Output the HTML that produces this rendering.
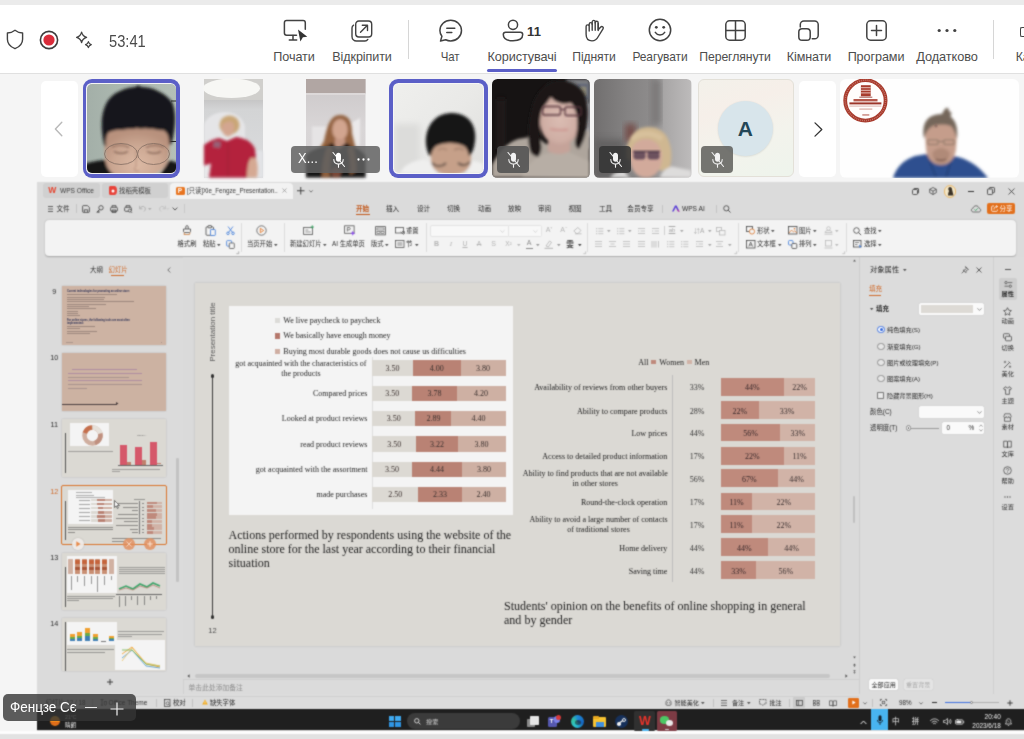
<!DOCTYPE html>
<html lang="uk">
<head>
<meta charset="utf-8">
<title>Meeting</title>
<style>
*{box-sizing:border-box;margin:0;padding:0}
html,body{width:1024px;height:739px;overflow:hidden;background:#f5f5f5;font-family:"Liberation Sans","Noto Sans CJK SC",sans-serif;color:#424242}
.abs{position:absolute}
#root{position:relative;width:1024px;height:739px;overflow:hidden;background:#f5f5f5}
#topstrip{left:0;top:0;width:1024px;height:5px;background:#ebebeb}
#toolbar{left:0;top:5px;width:1024px;height:69px;background:#fff;border-bottom:1px solid #e0e0e0}
.tb{position:absolute;top:44.3px;font-size:13.5px;color:#4d4d4d;white-space:nowrap;transform:translateX(-50%);letter-spacing:-0.1px}
.ic{position:absolute}
svg{display:block;overflow:visible}
.sf{position:absolute;white-space:nowrap;line-height:1.15;font-family:"Liberation Serif",serif}
.c{position:absolute;white-space:nowrap;line-height:1.2;font-family:"Liberation Sans","Noto Sans CJK SC",sans-serif}
.mb{top:146px;width:32px;height:27px;border-radius:4px;background:rgba(70,70,70,.82)}
.mb:after{content:"";position:absolute;left:0;top:0;width:32px;height:27px}

</style>
</head>
<body>
<div id="root">
<div class="abs" id="topstrip"></div>
<div class="abs" id="toolbar">
  <span class="abs" style="left:109px;top:26.500px;font-size:16.500px;color:#4a4a4a;transform:scaleX(.89);transform-origin:0 50%">53:41</span>

  <!-- shield -->
  <svg class="ic" style="left:6px;top:24px" width="18" height="21" viewBox="0 0 18 21"><path d="M9 1.2c2.4 1.9 4.9 2.7 7.6 2.8v6.3c0 4.300-2.800 7.500-7.600 9.400c-4.800-1.900-7.600-5.100-7.600-9.400v-6.300c2.700-.1 5.200-.9 7.600-2.800z" fill="none" stroke="#424242" stroke-width="1.4" stroke-linejoin="round"/></svg>
  <!-- record -->
  <svg class="ic" style="left:39px;top:25px" width="20" height="20" viewBox="0 0 20 20"><circle cx="10" cy="10" r="8.6" fill="none" stroke="#3d3d3d" stroke-width="1.6"/><circle cx="10" cy="10" r="5.6" fill="#d92c3a"/></svg>
  <!-- sparkle -->
  <svg class="ic" style="left:75px;top:26px" width="18" height="18" viewBox="0 0 18 18"><path d="M6.600 1.200c.7 3 1.900 4.400 5 5.200c-3.100.8-4.300 2.200-5 5.200c-.7-3-1.900-4.400-5-5.200c3.100-.8 4.300-2.200 5-5.200z" fill="none" stroke="#424242" stroke-width="1.3" stroke-linejoin="round"/><path d="M13.400 10.700c.4 1.700 1.100 2.500 2.900 3c-1.800.5-2.500 1.300-2.900 3c-.4-1.700-1.100-2.500-2.900-3c1.800-.5 2.500-1.300 2.900-3z" fill="none" stroke="#424242" stroke-width="1.2" stroke-linejoin="round"/></svg>
  <!-- share screen (Почати) -->
  <svg class="ic" style="left:283px;top:14px" width="25" height="24" viewBox="0 0 25 24"><path d="M13.500 16.300H3.600c-1.200 0-2.200-1-2.200-2.200V3.800c0-1.200 1-2.200 2.200-2.200h16.500c1.200 0 2.200 1 2.200 2.200v6.500" fill="none" stroke="#424242" stroke-width="1.500" stroke-linecap="round"/><path d="M10 16.500v4.300M6.300 21h7.400" fill="none" stroke="#424242" stroke-width="1.500" stroke-linecap="round"/><path d="M15 10.500l9.300 7.300-4.400.5-2.500 4.200z" fill="#333"/></svg>
  <!-- popout (Відкріпити) -->
  <svg class="ic" style="left:351px;top:15px" width="22" height="22" viewBox="0 0 22 22"><rect x="4.700" y="1" width="16" height="16" rx="3.200" fill="none" stroke="#424242" stroke-width="1.400"/><path d="M2.600 5.200c-1 .6-1.600 1.600-1.600 2.800v8.500c0 2.500 2 4.500 4.500 4.500h8.500c1.200 0 2.200-.6 2.800-1.600" fill="none" stroke="#424242" stroke-width="1.400" stroke-linecap="round"/><path d="M9.500 12.300l6.700-6.700M11.300 5.300h5.200v5.200" fill="none" stroke="#424242" stroke-width="1.400" stroke-linecap="round" stroke-linejoin="round"/></svg>
  <div class="abs" style="left:407.500px;top:15px;width:1px;height:39px;background:#d6d6d6"></div>
  <!-- chat -->
  <svg class="ic" style="left:438px;top:14px" width="25" height="24" viewBox="0 0 25 24"><path d="M12.700 1.300c6 0 10.800 4.600 10.800 10.300s-4.800 10.300-10.800 10.300c-1.800 0-3.500-.4-5-1.100l-5.200 1.300 1.400-4.800c-1.300-1.600-2-3.600-2-5.700c0-5.700 4.800-10.300 10.800-10.300z" fill="none" stroke="#424242" stroke-width="1.500" stroke-linejoin="round"/><path d="M8.800 9.200h8M8.800 13.600h5" stroke="#424242" stroke-width="1.500" stroke-linecap="round"/></svg>
  <!-- people -->
  <svg class="ic" style="left:502px;top:14px" width="22" height="24" viewBox="0 0 22 24"><circle cx="11" cy="5.800" r="4.600" fill="none" stroke="#424242" stroke-width="1.500"/><path d="M3.600 13.300h14.800c1.300 0 2.300 1 2.300 2.300c0 3.800-3.600 6.200-9.700 6.200s-9.700-2.400-9.700-6.200c0-1.300 1-2.300 2.300-2.300z" fill="none" stroke="#424242" stroke-width="1.500"/></svg>
  <span class="abs" style="left:527px;top:18.500px;font-size:13px;font-weight:700;color:#333;letter-spacing:0.3px">11</span>
  <div class="abs" style="left:487px;top:64px;width:70px;height:3px;border-radius:1.500px;background:#5b5fc7"></div>
  <!-- hand -->
  <svg class="ic" style="left:585px;top:14px" width="20" height="24" viewBox="0 0 20 24"><path d="M4.200 12V5.200c0-.9.700-1.600 1.500-1.600s1.500.7 1.500 1.600V3c0-.9.700-1.600 1.500-1.600s1.500.7 1.500 1.600v.9c0-.9.700-1.600 1.500-1.600s1.500.7 1.500 1.600v6.800l2.300-2.500c.7-.7 1.700-.8 2.400-.2c.5.500.5 1.300.1 1.900l-4.700 7.600c-1.300 2.500-3.300 4.400-6.300 4.400c-3.800 0-5.900-2.800-5.900-6.600V7.500c0-.9.700-1.600 1.500-1.600s1.600.7 1.600 1.600" fill="none" stroke="#424242" stroke-width="1.400" stroke-linecap="round" stroke-linejoin="round"/><path d="M7.200 5v6.200M10.200 3.500v7.700M13.200 4.500v7" fill="none" stroke="#424242" stroke-width="1.400" stroke-linecap="round"/></svg>
  <!-- smile -->
  <svg class="ic" style="left:648px;top:13px" width="24" height="24" viewBox="0 0 24 24"><circle cx="12" cy="12" r="10.700" fill="none" stroke="#424242" stroke-width="1.500"/><circle cx="8.300" cy="9.300" r="1.400" fill="#424242"/><circle cx="15.700" cy="9.300" r="1.400" fill="#424242"/><path d="M7.300 14.300c1.100 1.700 2.700 2.600 4.700 2.600s3.600-.9 4.700-2.600" fill="none" stroke="#424242" stroke-width="1.500" stroke-linecap="round"/></svg>
  <!-- grid -->
  <svg class="ic" style="left:725px;top:15px" width="21" height="21" viewBox="0 0 21 21"><rect x=".8" y=".8" width="19.400" height="19.400" rx="3.800" fill="none" stroke="#424242" stroke-width="1.500"/><path d="M10.500 1v19M1 10.500h19" stroke="#424242" stroke-width="1.500"/></svg>
  <!-- rooms -->
  <svg class="ic" style="left:798px;top:15px" width="22" height="21" viewBox="0 0 22 21"><path d="M2.300 7V4.500c0-2 1.600-3.600 3.600-3.600h10.700c2 0 3.600 1.600 3.600 3.600v10.700c0 2-1.600 3.600-3.600 3.600h-2.400" fill="none" stroke="#424242" stroke-width="1.500" stroke-linecap="round"/><rect x=".8" y="8.800" width="11.400" height="11.400" rx="3.300" fill="none" stroke="#424242" stroke-width="1.500"/></svg>
  <!-- apps plus -->
  <svg class="ic" style="left:866px;top:15px" width="21" height="21" viewBox="0 0 21 21"><rect x=".8" y=".8" width="19.400" height="19.400" rx="3.800" fill="none" stroke="#424242" stroke-width="1.500"/><path d="M10.500 5.500v10M5.500 10.500h10" stroke="#424242" stroke-width="1.500" stroke-linecap="round"/></svg>
  <!-- more dots -->
  <svg class="ic" style="left:937px;top:22.500px" width="20" height="5" viewBox="0 0 20 5"><circle cx="2.200" cy="2.500" r="1.600" fill="#424242"/><circle cx="10" cy="2.500" r="1.600" fill="#424242"/><circle cx="17.800" cy="2.500" r="1.600" fill="#424242"/></svg>
  <div class="abs" style="left:993px;top:15px;width:1px;height:39px;background:#d6d6d6"></div>
  <div class="abs" style="left:1020px;top:22px;width:6px;height:10px;border:1.500px solid #424242;border-right:none;border-radius:2px 0 0 2px"></div>
  <span class="tb" style="left:294px;transform:translateX(-50%) scaleX(0.935)">Почати</span>
  <span class="tb" style="left:362px;transform:translateX(-50%) scaleX(0.931)">Відкріпити</span>
  <span class="tb" style="left:450px;transform:translateX(-50%) scaleX(0.848)">Чат</span>
  <span class="tb" style="left:522px;transform:translateX(-50%) scaleX(0.939)">Користувачі</span>
  <span class="tb" style="left:594px;transform:translateX(-50%) scaleX(0.897)">Підняти</span>
  <span class="tb" style="left:660px;transform:translateX(-50%) scaleX(0.888)">Реагувати</span>
  <span class="tb" style="left:735px;transform:translateX(-50%) scaleX(0.906)">Переглянути</span>
  <span class="tb" style="left:809px;transform:translateX(-50%) scaleX(0.927)">Кімнати</span>
  <span class="tb" style="left:876px;transform:translateX(-50%) scaleX(0.935)">Програми</span>
  <span class="tb" style="left:947px;transform:translateX(-50%) scaleX(0.946)">Додатково</span>
  <span class="tb" style="left:1037px;transform:translateX(-50%) scaleX(0.915)">Камера</span>
</div>

<!-- video strip -->
<div class="abs" style="left:41px;top:81px;width:37px;height:96px;background:#fff;border-radius:5px"></div>
<svg class="abs" style="left:54px;top:121px" width="9" height="16" viewBox="0 0 9 16"><path d="M7.800 1.200L1.400 8l6.400 6.800" fill="none" stroke="#b9b9b9" stroke-width="1.400" stroke-linecap="round" stroke-linejoin="round"/></svg>

<!-- tile 1 -->
<div class="abs" style="left:82.500px;top:79px;width:97.500px;height:98.700px;border-radius:9px;background:#5b5fc7"></div>
<div class="abs" style="left:86.300px;top:82.900px;width:90px;height:91px;border-radius:5.500px;background:#f4f4f4"></div>
<svg class="abs" style="left:87px;top:83.600px;border-radius:5px;overflow:hidden" width="89" height="89.500" viewBox="0 0 89 89.500">
 <defs><filter id="b1" x="-20%" y="-20%" width="140%" height="140%"><feGaussianBlur stdDeviation="1.600"/></filter><filter id="b2" x="-20%" y="-20%" width="140%" height="140%"><feGaussianBlur stdDeviation="3"/></filter><filter id="b0" x="-20%" y="-20%" width="140%" height="140%"><feGaussianBlur stdDeviation=".8"/></filter>
 <linearGradient id="t1bg" x1="0" x2="1" y1="0" y2="0"><stop offset="0" stop-color="#a3afa8"/><stop offset=".3" stop-color="#aab6ae"/><stop offset="1" stop-color="#b4bfb7"/></linearGradient>
 <radialGradient id="t1f" cx=".5" cy=".75" r=".6"><stop offset="0" stop-color="#dcb9a4"/><stop offset=".6" stop-color="#cba792"/><stop offset="1" stop-color="#b8917d"/></radialGradient></defs>
 <rect width="89" height="89.500" fill="url(#t1bg)"/>
 <path d="M84 17h5M82 57.500h7" stroke="#2a2d2c" stroke-width="1.200"/>
 <g filter="url(#b1)">
 <path d="M-2 92V80c5-2 12-3.500 20-4l10 16zM92 92V80c-3-2-6-3-10-3.500L72 92z" fill="#121416"/>
 <path d="M17 48c2-6 8-9 16-9h30c10 0 18 4 20 12l-1 22c-2 12-14 22-36 22S18 84 18 72z" fill="url(#t1f)"/>
 <path d="M17 60c-3-14-4-30 3-42C26 8 38 4 48 3c3-2 5-2 6 0c12 0 24 6 31 15c4 8 4 24 0 40c-1 4-3 4-3 0c0-6-2-10-6-12c-5 1-9-2-14-1c-4-2-8 1-12-1c-5 2-10 0-15 2c-5-1-9 1-13 2c-3 3-3 8-3 12c0 3-1 3-2 0z" fill="#15171a"/>
 </g>
 <g filter="url(#b0)">
 <path d="M25 63c5-2.500 11-2.500 17 .5M59 63.500c6-3 12-3 18-.5" fill="none" stroke="#8a6555" stroke-width="1.400" opacity=".75"/>
 <path d="M27 67.500c4 2.500 10 2.500 14 0M60 67.500c4 2.500 10 2.500 14 0" fill="none" stroke="#6e4f44" stroke-width="1.300" opacity=".8"/>
 <path d="M49 66v16c-2 2-2 4 0 5h3" fill="none" stroke="#b48e7b" stroke-width="1.500" opacity=".6"/>
 </g>
 <g fill="none" stroke="#7a665c" stroke-width=".9" opacity=".8"><ellipse cx="34" cy="70" rx="16.500" ry="10.500"/><ellipse cx="66.500" cy="70" rx="16" ry="10.500"/></g>
</svg>

<!-- tile 2 -->
<svg class="abs" style="left:204px;top:79px" width="59" height="98.600" viewBox="0 0 59 98.600">
 <defs><linearGradient id="t2w" x1="0" x2="0" y1="0" y2="1"><stop offset="0" stop-color="#c6c6c6"/><stop offset=".12" stop-color="#d3d4d5"/><stop offset="1" stop-color="#dcdddf"/></linearGradient></defs>
 <rect width="59" height="98.600" fill="#d0cfcc"/>
 <rect y="21" width="59" height="77.600" fill="url(#t2w)"/>
 <ellipse cx="27.500" cy="9.300" rx="28.500" ry="9.700" fill="#f7f7f4"/>
 <g filter="url(#b0)">
 <path d="M0 98.600V45c3-7 11-12 21-12s17 5 20 14v51.600z" fill="#e5e5e7"/>
 <rect x="50" y="72" width="9" height="26.600" fill="#e2e3e6"/>
 <rect x="0" y="84" width="9" height="14.600" fill="#e8e8ea"/>
 </g>
 <g filter="url(#b1)">
 <ellipse cx="25.500" cy="46" rx="10" ry="9.500" fill="#c9a676"/>
 <ellipse cx="24" cy="49" rx="6.300" ry="8.500" fill="#d3a690"/>
 <path d="M19 44c2-3 7-4 11-2" stroke="#c9a676" stroke-width="3" fill="none"/>
 <path d="M0 66c4-3 9-6 15-7l8 3 9-4c8 1 16 4 19 12l1 10-7 2-2 16.600H5l2-14-7 2z" fill="#b4233d"/>
 <path d="M43 98.600c0-9 1-15 4-20l5 1c2 6 2 12 1 19z" fill="#d5a993"/>
 <path d="M10 62l7 1-1 6-7-1z" fill="#8a7a90" opacity=".7"/>
 <path d="M24 64v34" stroke="#8f1a30" stroke-width="1" opacity=".7"/>
 </g>
</svg>

<!-- tile 3 -->
<svg class="abs" style="left:306px;top:79px" width="59.500" height="98.600" viewBox="0 0 59.500 98.600">
 <defs><linearGradient id="t3w" x1="0" x2="0" y1="0" y2="1"><stop offset="0" stop-color="#cbc7c8"/><stop offset=".5" stop-color="#d9d6d7"/><stop offset="1" stop-color="#d6d3d4"/></linearGradient></defs>
 <rect width="59.500" height="98.600" fill="url(#t3w)"/>
 <rect width="59.500" height="14.500" fill="#b1a6a3"/>
 <rect y="14.300" width="59.500" height="1.200" fill="#e9e6e6"/>
 <g filter="url(#b0)">
 <rect x="6" y="47.500" width="17" height="23" fill="#e6e4e5"/>
 <path d="M42 46l12-7v27l-12 3z" fill="#ebe9ea"/>
 </g>
 <g filter="url(#b1)">
 <path d="M4 92c2-10 8-20 14-30c3-14 6-26 16-26c10 0 12 8 12 18c2 10 6 20 6 34l-10 8H10z" fill="#93623f"/>
 <path d="M6 90c3-10 8-18 13-26c1 8 0 18-3 28z" fill="#a9753f"/>
 <ellipse cx="34" cy="50.500" rx="7.800" ry="10.500" fill="#d2a58f"/>
 <path d="M29 60h10v9H29z" fill="#c49682"/>
 <path d="M0 98.600V76c4-4 10-7 18-8l8-4 6 6 8-6 8 4c5 2 9 5 11.500 9v21.600z" fill="#141518"/>
 <path d="M16 98.600c0-12 2-22 6-32l4 4c-2 9-3 18-2 28zM50 92c0-10-1-18-4-26l-4 4c2 8 3 16 2 26z" fill="#8d5e3c"/>
 <path d="M24 92l6-4 6 4-3 6.600h-6z" fill="#7a4a38"/>
 </g>
</svg>
<div class="abs" style="left:291.300px;top:145.700px;width:88.700px;height:27.400px;border-radius:4px;background:rgba(98,98,98,.86)"></div>
<span class="abs" style="left:298px;top:150px;font-size:14px;color:#fff;letter-spacing:.2px;transform:scaleX(.92);transform-origin:0 50%">X...</span>
<svg class="abs" style="left:330.5px;top:150.500px" width="15" height="18" viewBox="0 0 15 18"><path d="M7.500 1.800c1.500 0 2.500 1.100 2.500 2.500v4c0 1.400-1 2.500-2.500 2.500S5 9.700 5 8.300v-4c0-1.400 1-2.500 2.500-2.500z" fill="#fff"/><path d="M2.800 8.500c0 2.600 2 4.600 4.700 4.600s4.700-2 4.700-4.600M7.500 13.200v3" fill="none" stroke="#fff" stroke-width="1.100" stroke-linecap="round"/><path d="M2 1.500l11.500 14" stroke="#fff" stroke-width="1.100" stroke-linecap="round"/></svg>
<svg class="abs" style="left:357px;top:158.200px" width="13" height="3" viewBox="0 0 13 3"><circle cx="1.500" cy="1.500" r="1.150" fill="#fff"/><circle cx="6.500" cy="1.500" r="1.150" fill="#fff"/><circle cx="11.500" cy="1.500" r="1.150" fill="#fff"/></svg>

<!-- tile 4 -->
<div class="abs" style="left:389px;top:79px;width:98.600px;height:98.700px;border-radius:9px;background:#5b5fc7"></div>
<div class="abs" style="left:393px;top:82.900px;width:90.800px;height:91px;border-radius:5.500px;background:#f6f6f6"></div>
<svg class="abs" style="left:393.700px;top:83.600px;border-radius:5px;overflow:hidden" width="89.700" height="89.500" viewBox="0 0 89.700 89.500">
 <defs><linearGradient id="t4bg" x1="0" x2="1" y1="0" y2="1"><stop offset="0" stop-color="#efefed"/><stop offset=".5" stop-color="#e9e9e7"/><stop offset="1" stop-color="#dededc"/></linearGradient></defs>
 <rect width="89.700" height="89.500" fill="url(#t4bg)"/>
 <rect x="0" y="40" width="26" height="50" fill="#dcdcda" filter="url(#b2)"/>
 <g filter="url(#b1)">
 <path d="M6 89.500c3-8 12-13 24-14l12 4v10.500zM89.700 89.500V80c-4-2-8-3-12-3l-6 12.500z" fill="#efefee"/>
 <path d="M37 58h40v20c-1 8-9 13-20 13s-19-5-20-13z" fill="#c6a089"/>
 <path d="M33 66c-3-12 0-24 8-31c8-7 22-8 31-2c9 6 11 18 8 30c-1 4-3 8-5 9c-1-4-2-8-5-10c-8-4-20-4-28 0c-3 3-5 6-5 10c-2 0-3-3-4-6z" fill="#131416"/>
 <path d="M38 79c4 4 10 4 14 0M64 79c4 3 8 3 12-1" fill="none" stroke="#2f2a28" stroke-width="1.700"/>
 <path d="M44 66c3-2 6-2 9 0M60 66c3-2 7-2 10 0" fill="none" stroke="#7a5a4c" stroke-width="1.200" opacity=".7"/>
 </g>
</svg>

<!-- tile 5 -->
<svg class="abs" style="left:492px;top:79px;border-radius:5.500px;overflow:hidden" width="97.600" height="98.600" viewBox="0 0 97.600 98.600">
 <defs><radialGradient id="t5f" cx=".5" cy=".5" r=".6"><stop offset="0" stop-color="#dbbcb2"/><stop offset=".7" stop-color="#cfaea4"/><stop offset="1" stop-color="#b8958c"/></radialGradient></defs>
 <rect width="97.600" height="98.600" fill="#161313"/>
 <rect x="5" y="20" width="8" height="50" fill="#241f1e" filter="url(#b2)"/>
 <rect x="74" y="0" width="23.600" height="70" fill="#7a7b80" filter="url(#b1)"/>
 <rect x="88" y="24" width="9.600" height="34" fill="#aeaeb2" filter="url(#b1)"/>
 <rect x="85.500" y="5" width="11" height="15" fill="#5f6577" filter="url(#b0)"/>
 <rect x="87.500" y="7.500" width="7" height="10" fill="#8d8a78" filter="url(#b0)"/>
 <g filter="url(#b1)">
 <path d="M0 98.600V86c6-12 14-22 26-26l18-3 10 8h22l8-8 13.600-6v47.600z" fill="#aea59c"/>
 <path d="M30 98.600c4-12 12-20 24-24l22-2 21.600 10v16.600z" fill="#b7aea5"/>
 <path d="M56 56h22v16c-6 4-16 4-22 0z" fill="#c5a399"/>
 <ellipse cx="68" cy="40.500" rx="20.500" ry="26" fill="url(#t5f)"/>
 <path d="M38 72c-3-12-2-30 2-44c3-12 10-22 22-26c12-3 24 2 30 12c4 8 5 20 3 32c-1 10-4 18-8 24c-3-1-4-4-4-8c2-8 3-16 2-24c-1-6-3-10-6-14c-8 2-16 0-20-6c-4 6-8 10-10 16c-2 10-2 20 0 30c1 6 0 10-3 14c-4-1-7-3-8-6z" fill="#1b1819"/>
 <path d="M58 50c6 1.500 12 1.500 18 .5" stroke="#c98a86" stroke-width="1.800" fill="none" opacity=".8"/>
 </g>
 <g filter="url(#b0)" fill="none" stroke="#55353c" stroke-width="1.300"><rect x="50.500" y="27.500" width="18" height="8.500" rx="2"/><rect x="73" y="28" width="16" height="8.500" rx="2"/><path d="M68.500 30.500h4.500"/></g>
</svg>
<div class="abs" style="left:497px;top:146px;width:31.800px;height:27px;border-radius:4px;background:rgba(84,84,84,.9)"></div>

<!-- tile 6 -->
<svg class="abs" style="left:594.200px;top:79px;border-radius:5.500px;overflow:hidden" width="97.400" height="98.600" viewBox="0 0 97.400 98.600">
 <defs><linearGradient id="g6" x1="0" x2="1" y1="0" y2="0"><stop offset="0" stop-color="#716f6f"/><stop offset=".35" stop-color="#858383"/><stop offset=".6" stop-color="#8e8c8c"/><stop offset=".72" stop-color="#a8a6a6"/><stop offset="1" stop-color="#bdbbbb"/></linearGradient></defs>
 <rect width="97.400" height="98.600" fill="url(#g6)"/>
 <rect x="57" y="0" width="10" height="46" fill="#7b7979" filter="url(#b2)"/>
 <rect x="0" y="60" width="30" height="38.600" fill="#5f5d5d" filter="url(#b2)" opacity=".8"/>
 <rect x="31" y="45" width="11" height="18" fill="#76504b" filter="url(#b2)"/>
 <g filter="url(#b1)">
 <path d="M66 98.600c2-6 6-10 12-11l19.400 4v7zM16 98.600c3-4 8-6 14-6l6 6z" fill="#dddcdb"/>
 <path d="M33 80c-2-12 2-24 12-30c10-4 22-2 28 8c4 8 6 18 3 30l-8 4z" fill="#cfb791"/>
 <path d="M36 78c0-10 6-18 16-18s16 8 16 18c0 12-6 20.600-16 20.600S36 90 36 78z" fill="#d2aa9b"/>
 <path d="M38 60c6-6 20-8 30 0" stroke="#d8c19c" stroke-width="5" fill="none"/>
 </g>
 <g filter="url(#b0)"><rect x="39.500" y="72" width="12" height="8.500" rx="3" fill="#5a4253" opacity=".85"/><rect x="53.500" y="72" width="12" height="8.500" rx="3" fill="#5a4253" opacity=".85"/><path d="M39 72.500h27" stroke="#3e2c3a" stroke-width="1.300"/></g>
</svg>
<div class="abs" style="left:599px;top:146px;width:32px;height:27px;border-radius:4px;background:rgba(52,52,52,.88)"></div>

<!-- tile 7 -->
<div class="abs" style="left:697.500px;top:79.200px;width:96.400px;height:98px;border-radius:6px;border:1px solid #e3e0d8;background:linear-gradient(160deg,#f3f1ea 0%,#f6efe9 30%,#f3f3ec 60%,#eef4ec 100%)"></div>
<div class="abs" style="left:718px;top:101.300px;width:55px;height:55px;border-radius:50%;background:#d8e5eb;box-shadow:0 .5px 2px rgba(0,0,0,.12)"></div>
<span class="abs" style="left:745.400px;top:116.600px;transform:translateX(-50%);font-size:21px;font-weight:700;color:#234657;line-height:1.15">A</span>
<div class="abs" style="left:701px;top:145.800px;width:32.200px;height:27.300px;border-radius:4px;background:rgba(92,92,88,.84)"></div>
<!-- next -->
<div class="abs" style="left:799px;top:81px;width:36.500px;height:96.200px;background:#fff;border-radius:5px"></div>
<svg class="abs" style="left:813.500px;top:121.600px" width="9" height="15" viewBox="0 0 9 15"><path d="M1 .900l6.800 6.600L1 14.100" fill="none" stroke="#333" stroke-width="1.300" stroke-linecap="round" stroke-linejoin="round"/></svg>
<!-- big tile -->
<svg class="abs" style="left:839.700px;top:79.300px;border-radius:6px;overflow:hidden" width="179" height="98.600" viewBox="0 0 179 98.600">
 <rect width="179" height="98.600" fill="#fefefe"/>
 <circle cx="25.400" cy="21.400" r="20.200" fill="#fffdfc" stroke="#a83b2d" stroke-width="3.800"/>
 <circle cx="25.400" cy="21.400" r="20.200" fill="none" stroke="#d9a096" stroke-width="1.400" stroke-dasharray=".7 1.300" opacity=".75"/>
 <rect x="20.900" y="6.200" width="9.800" height="11.100" fill="#a83b2d"/>
 <path d="M20.900 8.700h9.800M20.900 11.300h9.800M20.900 13.900h9.800" stroke="#f0cfc8" stroke-width=".9"/>
 <path d="M19.300 18.200h13" stroke="#8a2f25" stroke-width=".8"/>
 <rect x="13.500" y="20" width="24" height="2.400" fill="#a83b2d" opacity=".85"/>
 <rect x="9.400" y="23.400" width="32" height="2" fill="#9c3428"/>
 <path d="M9.400 27.100h32" stroke="#b9685d" stroke-width=".5"/>
 <rect x="19.300" y="29.500" width="13" height="1.200" fill="#c98a80" opacity=".7"/>
 <rect x="22.300" y="35.300" width="7" height="1.300" fill="#b4574b" opacity=".8"/>
 <g filter="url(#b1)">
 <path d="M53 99c3-10 10-18 22-22l12-2 14 8 12-6c14 2 26 10 35 22z" fill="#2f4f8f"/>
 <path d="M88 78l8 20M112 78l-6 20" stroke="#223c72" stroke-width="1.500" fill="none"/>
 <path d="M85 54c0-12 6-18 16-18s16 6 16 18l-1 16c-1 10-7 16-15 16s-14-6-15-16z" fill="#c59d8b"/>
 <path d="M92 74c2-3 5-5 9-5s7 2 9 5c-1 7-4 11-9 11s-8-4-9-11z" fill="#b08a78"/>
 <path d="M84 60c-2-10 0-18 6-22c3-2 8-3 12-3c2-4 4-7 6-6c1 2 1 4 4 5c-1 1-2 2-1 4c5 4 7 12 6 22c-2-6-3-10-6-13c-7-2-14-2-20 1c-4 3-6 7-7 12z" fill="#74665a"/>
 </g>
 <g filter="url(#b0)"><path d="M88 61h10v4.500H88zM104 61h10v4.500h-10zM98 62.500h6" fill="none" stroke="#8c7668" stroke-width=".9"/><path d="M96 80c3 1.500 7 1.500 10 0" stroke="#7a5a50" stroke-width="1.300" fill="none"/><circle cx="96" cy="47" r=".9" fill="#4a3a34"/></g>
</svg>
<svg class="abs" style="left:505.5px;top:150.500px" width="15" height="18" viewBox="0 0 15 18"><path d="M7.500 1.800c1.500 0 2.500 1.100 2.500 2.500v4c0 1.400-1 2.500-2.500 2.500S5 9.700 5 8.300v-4c0-1.400 1-2.500 2.500-2.500z" fill="#f2f2f2"/><path d="M2.800 8.500c0 2.600 2 4.600 4.700 4.600s4.700-2 4.700-4.600M7.500 13.200v3" fill="none" stroke="#f2f2f2" stroke-width="1.100" stroke-linecap="round"/><path d="M2 1.500l11.500 14" stroke="#f2f2f2" stroke-width="1.100" stroke-linecap="round"/></svg>
<svg class="abs" style="left:607.5px;top:150.500px" width="15" height="18" viewBox="0 0 15 18"><path d="M7.500 1.800c1.500 0 2.500 1.100 2.500 2.500v4c0 1.400-1 2.500-2.500 2.500S5 9.700 5 8.300v-4c0-1.400 1-2.500 2.500-2.500z" fill="#f2f2f2"/><path d="M2.800 8.500c0 2.600 2 4.600 4.700 4.600s4.700-2 4.700-4.600M7.500 13.200v3" fill="none" stroke="#f2f2f2" stroke-width="1.100" stroke-linecap="round"/><path d="M2 1.500l11.500 14" stroke="#f2f2f2" stroke-width="1.100" stroke-linecap="round"/></svg>
<svg class="abs" style="left:709.5px;top:150.500px" width="15" height="18" viewBox="0 0 15 18"><path d="M7.500 1.800c1.500 0 2.500 1.100 2.500 2.500v4c0 1.400-1 2.500-2.500 2.500S5 9.700 5 8.300v-4c0-1.400 1-2.500 2.500-2.500z" fill="#f2f2f2"/><path d="M2.800 8.500c0 2.600 2 4.600 4.700 4.600s4.700-2 4.700-4.600M7.500 13.200v3" fill="none" stroke="#f2f2f2" stroke-width="1.100" stroke-linecap="round"/><path d="M2 1.500l11.500 14" stroke="#f2f2f2" stroke-width="1.100" stroke-linecap="round"/></svg>
<svg width="0" height="0" style="position:absolute"><defs><filter id="soft" x="0" y="0" width="100%" height="100%" color-interpolation-filters="sRGB"><feConvolveMatrix order="3" kernelMatrix="0.04 0.10 0.04 0.10 0.44 0.10 0.04 0.10 0.04" edgeMode="duplicate"/></filter></defs></svg><div id="share" style="position:absolute;left:0;top:0;width:1024px;height:739px;filter:url(#soft);">
<div class="abs" style="left:37px;top:182px;width:987px;height:549px;background:#dbdbdb"></div>
<div class="abs" style="left:43px;top:183.2px;width:57px;height:14.5px;background:#d0d0d0;border-radius:3px"></div>
<span class="c" style="left:48.3px;top:185.2px;font-size:8.5px;color:#e5432d;font-weight:700;letter-spacing:-.3px">W</span>
<span class="c" style="left:60px;top:186.5px;font-size:6.6px;color:#3a3a3a;">WPS Office</span>
<div class="abs" style="left:102px;top:183.2px;width:65.5px;height:14.5px;background:#d0d0d0;border-radius:3px"></div>
<svg class="abs" style="left:109px;top:186.2px;" width="8" height="9" viewBox="0 0 8 9"><path d="M1.500 0h3.800c1.600 0 2.700 1.300 2.700 4.500s-1.100 4.500-2.700 4.500H1.500C.6 9 0 8.400 0 7.500v-6C0 .6.600 0 1.500 0z" fill="#e8433a"/><circle cx="4" cy="5" r="1.500" fill="#fff"/></svg>
<span class="c" style="left:119px;top:186.7px;font-size:6.4px;color:#3a3a3a;">找稻壳模板</span>
<div class="abs" style="left:170px;top:183px;width:123px;height:15.5px;background:#f2f2f2;border-radius:4px 4px 0 0"></div>
<div class="abs" style="left:176px;top:186.5px;width:8.5px;height:8.5px;background:#e8741f;border-radius:1.500px"></div>
<span class="c" style="left:177.8px;top:186.9px;font-size:6.5px;color:#fff;font-weight:700">P</span>
<span class="c" style="left:187px;top:186.7px;font-size:6.3px;color:#3a3a3a;letter-spacing:-.05px">[只读]Xie_Fengze_Presentation..</span>
<svg class="abs" style="left:281.5px;top:188px;" width="5" height="5" viewBox="0 0 5 5"><path d="M.5.500l4 4M4.500.500l-4 4" stroke="#8a8a8a" stroke-width=".7"/></svg>
<svg class="abs" style="left:297px;top:186.8px;" width="7.5" height="7.5" viewBox="0 0 7.5 7.5"><path d="M3.750 0v7.500M0 3.750h7.500" stroke="#333" stroke-width=".9"/></svg>
<svg class="abs" style="left:309px;top:189.5px;" width="4" height="3" viewBox="0 0 4 3"><path d="M.3.400l1.700 1.700L3.700.400" fill="none" stroke="#444" stroke-width=".7"/></svg>
<svg class="abs" style="left:912px;top:187.5px;" width="7" height="7" viewBox="0 0 7 7"><rect x=".5" y="1.500" width="5" height="5" rx="1" fill="none" stroke="#333" stroke-width=".8"/><path d="M1.800 1.500V1c0-.3.200-.5.500-.5H6c.3 0 .5.200.5.500v3.700c0 .3-.2.500-.5.500h-.5" fill="none" stroke="#333" stroke-width=".8"/></svg>
<svg class="abs" style="left:928.5px;top:187px;" width="8" height="8" viewBox="0 0 8 8"><path d="M4 .500l3.300 1.800v3.400L4 7.500.700 5.700V2.300zM.700 2.300L4 4.100l3.300-1.800M4 4.100v3.400" fill="none" stroke="#333" stroke-width=".7" stroke-linejoin="round"/></svg>
<div class="abs" style="left:943.5px;top:185px;width:12.5px;height:12.5px;border-radius:50%;background:#f3e7c9;border:1px solid #e9b96e"></div>
<svg class="abs" style="left:946.5px;top:187px;" width="7" height="9" viewBox="0 0 7 9"><path d="M3 0c1.300 0 2 1 2 2.200L6.500 8.500H1c0-2 .5-3.500 1.200-4.500C1.500 3.500 1.300 2.800 1.300 2 1.300.800 2 0 3 0z" fill="#3b3226"/></svg>
<div class="abs" style="left:968px;top:190.8px;width:6px;height:0.9px;background:#333"></div>
<svg class="abs" style="left:987px;top:187px;" width="8" height="8" viewBox="0 0 8 8"><rect x=".5" y="2" width="5" height="5.500" rx=".8" fill="none" stroke="#333" stroke-width=".8"/><path d="M2.300 2V1.200c0-.4.300-.7.700-.7h3.800c.4 0 .7.300.7.700V5c0 .4-.3.700-.7.700h-.9" fill="none" stroke="#333" stroke-width=".8"/></svg>
<svg class="abs" style="left:1008px;top:188px;" width="7" height="7" viewBox="0 0 7 7"><path d="M.5.500l6 6M6.500.500l-6 6" stroke="#333" stroke-width=".8"/></svg>
<svg class="abs" style="left:48px;top:205.5px;" width="5" height="6" viewBox="0 0 5 6"><path d="M0 .500h5M0 3h5M0 5.500h5" stroke="#444" stroke-width=".8"/></svg>
<span class="c" style="left:56.5px;top:204.6px;font-size:6.5px;color:#2b2b2b;">文件</span>
<div class="abs" style="left:76px;top:204px;width:0.7px;height:9px;background:#c4c4c4"></div>
<svg class="abs" style="left:81.5px;top:204.5px;" width="8" height="8" viewBox="0 0 8 8"><path d="M.600 1.300c0-.4.300-.7.700-.7h4.200l1.900 1.900v4.200c0 .4-.3.700-.7.700H1.300c-.4 0-.7-.3-.7-.7z" fill="none" stroke="#3c3c3c" stroke-width=".8"/><path d="M2.300 7.200V4.800h3.400v2.400" fill="none" stroke="#3c3c3c" stroke-width=".8"/></svg>
<svg class="abs" style="left:96px;top:204.5px;" width="8" height="8" viewBox="0 0 8 8"><circle cx="5" cy="2.800" r="2.200" fill="none" stroke="#3c3c3c" stroke-width=".8"/><path d="M3.500 4.500L.800 7.200h2.700M2.800 5.200v2" fill="none" stroke="#3c3c3c" stroke-width=".8"/></svg>
<svg class="abs" style="left:109.5px;top:204.5px;" width="8" height="8" viewBox="0 0 8 8"><rect x=".600" y="2.300" width="6.800" height="4" rx="1" fill="none" stroke="#3c3c3c" stroke-width=".8"/><path d="M2 2.300V.700h4v1.600M2 5h4v2.400H2z" fill="none" stroke="#3c3c3c" stroke-width=".8"/></svg>
<svg class="abs" style="left:123.5px;top:204.5px;" width="9" height="8" viewBox="0 0 9 8"><rect x=".600" y="2.300" width="6.800" height="4" rx="1" fill="none" stroke="#3c3c3c" stroke-width=".8"/><path d="M2 2.300V.700h4v1.600" fill="none" stroke="#3c3c3c" stroke-width=".8"/><circle cx="5.800" cy="5.600" r="1.500" fill="#dbdbdb" stroke="#3c3c3c" stroke-width=".7"/><path d="M6.900 6.700l1.200 1.200" stroke="#3c3c3c" stroke-width=".7"/></svg>
<svg class="abs" style="left:138.5px;top:205px;" width="7" height="7" viewBox="0 0 7 7"><path d="M1 3.500C2 1.500 4 .800 5.500 2c1.200 1 1.200 3-.5 4.500" fill="none" stroke="#a9a9a9" stroke-width=".8"/><path d="M.600.800v3h2.800" fill="none" stroke="#a9a9a9" stroke-width=".8"/></svg>
<svg class="abs" style="left:147.5px;top:208px;" width="4" height="3" viewBox="0 0 4 3"><path d="M0 0h3.600L1.800 2.200z" fill="#b0b0b0"/></svg>
<svg class="abs" style="left:158.5px;top:205px;" width="7" height="7" viewBox="0 0 7 7"><path d="M6 3.500C5 1.500 3 .800 1.500 2C.3 3 .3 5 2 6.500" fill="none" stroke="#bdbdbd" stroke-width=".8"/><path d="M6.400.800v3H3.600" fill="none" stroke="#bdbdbd" stroke-width=".8"/></svg>
<svg class="abs" style="left:166px;top:208px;" width="4" height="3" viewBox="0 0 4 3"><path d="M0 0h3.600L1.800 2.200z" fill="#d0d0d0"/></svg>
<svg class="abs" style="left:172px;top:207px;" width="6" height="4" viewBox="0 0 6 4"><path d="M.600.600l2.400 2.400L5.400.600" fill="none" stroke="#444" stroke-width=".9"/></svg>
<div class="abs" style="left:184px;top:204px;width:0.7px;height:9px;background:#c8c8c8"></div>
<span class="c" style="left:362.5px;top:204.5px;font-size:6.6px;color:#c2571a;transform:translateX(-50%);font-weight:700">开始</span>
<span class="c" style="left:392.5px;top:204.5px;font-size:6.6px;color:#2b2b2b;transform:translateX(-50%);">插入</span>
<span class="c" style="left:423.5px;top:204.5px;font-size:6.6px;color:#2b2b2b;transform:translateX(-50%);">设计</span>
<span class="c" style="left:453.5px;top:204.5px;font-size:6.6px;color:#2b2b2b;transform:translateX(-50%);">切换</span>
<span class="c" style="left:484.5px;top:204.5px;font-size:6.6px;color:#2b2b2b;transform:translateX(-50%);">动画</span>
<span class="c" style="left:514.5px;top:204.5px;font-size:6.6px;color:#2b2b2b;transform:translateX(-50%);">放映</span>
<span class="c" style="left:544.5px;top:204.5px;font-size:6.6px;color:#2b2b2b;transform:translateX(-50%);">审阅</span>
<span class="c" style="left:575px;top:204.5px;font-size:6.6px;color:#2b2b2b;transform:translateX(-50%);">视图</span>
<span class="c" style="left:605.5px;top:204.5px;font-size:6.6px;color:#2b2b2b;transform:translateX(-50%);">工具</span>
<span class="c" style="left:640.5px;top:204.5px;font-size:6.6px;color:#2b2b2b;transform:translateX(-50%);">会员专享</span>
<div class="abs" style="left:356px;top:214.3px;width:13.5px;height:1.2px;background:#c2571a"></div>
<div class="abs" style="left:662px;top:204.5px;width:0.7px;height:8px;background:#c4c4c4"></div>
<svg class="abs" style="left:671.5px;top:205px;" width="8" height="7" viewBox="0 0 8 7"><path d="M0 6.500L3 .500h1.600L7.600 6.500H5.900L3.800 2.300 1.700 6.500z" fill="#5a3fd6"/><path d="M4.300 4l2 2.500H8z" fill="#e83a8a"/></svg>
<span class="c" style="left:682px;top:204.5px;font-size:6.6px;color:#2b2b2b;">WPS AI</span>
<div class="abs" style="left:716px;top:204.5px;width:0.7px;height:8px;background:#c4c4c4"></div>
<svg class="abs" style="left:722.5px;top:204.5px;" width="8" height="8" viewBox="0 0 8 8"><circle cx="3.300" cy="3.300" r="2.600" fill="none" stroke="#3c3c3c" stroke-width=".8"/><path d="M5.200 5.200l2.300 2.300" stroke="#3c3c3c" stroke-width=".9"/></svg>
<svg class="abs" style="left:971px;top:204.5px;" width="10" height="8" viewBox="0 0 10 8"><path d="M2.500 7C1.200 7 .4 6.200.4 5.100c0-1 .7-1.800 1.700-1.900C2.400 1.700 3.500.800 5 .800c1.600 0 2.800 1 3 2.500c1 .1 1.700.900 1.700 1.800C9.700 6.200 8.900 7 7.700 7z" fill="none" stroke="#555" stroke-width=".8"/><path d="M3.500 4.300l1.200 1.200 2-2.200" fill="none" stroke="#2a9d57" stroke-width=".8"/></svg>
<div class="abs" style="left:986.5px;top:202.5px;width:28.5px;height:11.5px;background:#e26f1b;border-radius:2px"></div>
<svg class="abs" style="left:990.5px;top:205px;" width="7" height="7" viewBox="0 0 7 7"><path d="M3 1H1.500c-.5 0-.9.400-.9.900v3.600c0 .5.400.9.900.9h4c.5 0 .9-.4.900-.9V4.500" fill="none" stroke="#fff" stroke-width=".8"/><path d="M3 4.500c0-2 1-3 3.500-3M5.200.300l1.400 1.200-1.400 1.200" fill="none" stroke="#fff" stroke-width=".8"/></svg>
<span class="c" style="left:999.5px;top:204.6px;font-size:6.5px;color:#fff;">分享</span>
<div class="abs" style="left:45px;top:219.5px;width:970.5px;height:36.5px;background:#f3f3f3;border-radius:4px;box-shadow:0 .5px 1.500px rgba(0,0,0,.25)"></div>
<svg class="abs" style="left:182px;top:225px;" width="10" height="10" viewBox="0 0 10 10"><path d="M1.500 4h7v2.500c0 .5-.5 1-1 1h-5c-.5 0-1-.5-1-1z" fill="none" stroke="#444" stroke-width=".8"/><path d="M3.800 4V1.700c0-.6.500-1.100 1.200-1.100s1.200.5 1.200 1.100V4" fill="none" stroke="#444" stroke-width=".8"/><path d="M2.500 7.500l-.5 2h5.500l.5-2" fill="none" stroke="#c77a3a" stroke-width=".8"/></svg>
<span class="c" style="left:187px;top:240.2px;font-size:6.3px;color:#2e2e2e;transform:translateX(-50%);">格式刷</span>
<svg class="abs" style="left:205px;top:224.5px;" width="11" height="11" viewBox="0 0 11 11"><rect x="1" y="1.800" width="7.500" height="8.500" rx="1" fill="none" stroke="#444" stroke-width=".8"/><rect x="3" y=".600" width="3.500" height="2.200" rx=".5" fill="#f3f3f3" stroke="#444" stroke-width=".8"/><rect x="5.500" y="4.500" width="4.800" height="6" rx=".6" fill="#f3f3f3" stroke="#3b78d8" stroke-width=".8"/></svg>
<span class="c" style="left:203px;top:240.2px;font-size:6.3px;color:#2e2e2e;">粘贴</span>
<svg class="abs" style="left:216.5px;top:243.5px;" width="4" height="3" viewBox="0 0 4 3"><path d="M0 0h3.600L1.800 2.200z" fill="#555"/></svg>
<svg class="abs" style="left:225.5px;top:226px;" width="9" height="9" viewBox="0 0 9 9"><path d="M2 .500l4.500 6M7 .500l-4.500 6" stroke="#3b78d8" stroke-width=".8"/><circle cx="2" cy="7.300" r="1.300" fill="none" stroke="#3b78d8" stroke-width=".8"/><circle cx="7" cy="7.300" r="1.300" fill="none" stroke="#3b78d8" stroke-width=".8"/></svg>
<svg class="abs" style="left:225.5px;top:239.5px;" width="9" height="9" viewBox="0 0 9 9"><rect x=".600" y=".600" width="5" height="5.500" rx=".8" fill="none" stroke="#3b78d8" stroke-width=".8"/><rect x="3.300" y="3" width="5" height="5.500" rx=".8" fill="#f3f3f3" stroke="#555" stroke-width=".8"/></svg>
<svg class="abs" style="left:235.5px;top:251px;" width="3" height="3" viewBox="0 0 3 3"><path d="M.3 2.700h2.400V.3" fill="none" stroke="#888" stroke-width=".6"/></svg>
<div class="abs" style="left:240.5px;top:223px;width:0.7px;height:29px;background:#dcdcdc"></div>
<svg class="abs" style="left:256px;top:225px;" width="11" height="11" viewBox="0 0 11 11"><circle cx="5.500" cy="5.500" r="4.700" fill="none" stroke="#555" stroke-width=".8"/><path d="M4.300 3.300l3.400 2.200-3.400 2.200z" fill="none" stroke="#e26f1b" stroke-width=".8" stroke-linejoin="round"/></svg>
<span class="c" style="left:247px;top:240.2px;font-size:6.3px;color:#2e2e2e;">当页开始</span>
<svg class="abs" style="left:274px;top:243.5px;" width="4" height="3" viewBox="0 0 4 3"><path d="M0 0h3.600L1.800 2.200z" fill="#555"/></svg>
<div class="abs" style="left:283.5px;top:223px;width:0.7px;height:29px;background:#dcdcdc"></div>
<svg class="abs" style="left:303px;top:225px;" width="12" height="11" viewBox="0 0 12 11"><rect x=".600" y="2.500" width="9" height="7" fill="none" stroke="#555" stroke-width=".8"/><path d="M2.300 5h3M2.300 7h5.500" stroke="#777" stroke-width=".7"/><path d="M9.300.300v3.400M7.600 2H11" stroke="#2a9d57" stroke-width=".8"/></svg>
<span class="c" style="left:290px;top:240.2px;font-size:6.3px;color:#2e2e2e;">新建幻灯片</span>
<svg class="abs" style="left:322.5px;top:243.5px;" width="4" height="3" viewBox="0 0 4 3"><path d="M0 0h3.600L1.800 2.200z" fill="#555"/></svg>
<svg class="abs" style="left:343.5px;top:225px;" width="12" height="11" viewBox="0 0 12 11"><rect x=".600" y=".800" width="9.500" height="7.500" fill="none" stroke="#555" stroke-width=".8"/><path d="M3.300 6.500v-4h1.700c.8 0 1.300.5 1.300 1.200s-.5 1.200-1.300 1.200H3.300" fill="none" stroke="#555" stroke-width=".7"/><path d="M8.800 5.800l.8 1.700 1.700.8-1.700.8-.8 1.700-.8-1.700-1.700-.8 1.700-.8z" fill="#8a4fe8"/></svg>
<span class="c" style="left:332px;top:240.2px;font-size:6.3px;color:#2e2e2e;">AI 生成单页</span>
<svg class="abs" style="left:375px;top:225.5px;" width="11" height="10" viewBox="0 0 11 10"><rect x=".600" y=".600" width="9.800" height="8.300" fill="none" stroke="#555" stroke-width=".8"/><rect x="2" y="2" width="7" height="2" fill="none" stroke="#555" stroke-width=".6"/><rect x="2" y="5.300" width="3" height="2.300" fill="none" stroke="#555" stroke-width=".6"/><rect x="6" y="5.300" width="3" height="2.300" fill="none" stroke="#555" stroke-width=".6"/></svg>
<span class="c" style="left:371px;top:240.2px;font-size:6.3px;color:#2e2e2e;">版式</span>
<svg class="abs" style="left:384.5px;top:243.5px;" width="4" height="3" viewBox="0 0 4 3"><path d="M0 0h3.600L1.800 2.200z" fill="#555"/></svg>
<svg class="abs" style="left:394.5px;top:226.5px;" width="10" height="8" viewBox="0 0 10 8"><rect x=".500" y=".500" width="8" height="5.500" fill="none" stroke="#555" stroke-width=".8"/><path d="M5.500 5l3.500 2.500" stroke="#555" stroke-width=".8"/><path d="M7 4.500h2.500V7" fill="none" stroke="#555" stroke-width=".7"/></svg>
<span class="c" style="left:406px;top:226.7px;font-size:6.3px;color:#2e2e2e;">重置</span>
<svg class="abs" style="left:394.5px;top:240px;" width="10" height="8" viewBox="0 0 10 8"><rect x=".500" y=".500" width="8.500" height="7" fill="none" stroke="#555" stroke-width=".8"/><path d="M2.300 3h5M2.300 5h5" stroke="#555" stroke-width=".7"/></svg>
<span class="c" style="left:406px;top:240.2px;font-size:6.3px;color:#2e2e2e;">节</span>
<svg class="abs" style="left:415px;top:243.5px;" width="4" height="3" viewBox="0 0 4 3"><path d="M0 0h3.600L1.800 2.200z" fill="#555"/></svg>
<div class="abs" style="left:425.5px;top:223px;width:0.7px;height:29px;background:#dcdcdc"></div>
<div class="abs" style="left:430px;top:225px;width:79px;height:11.5px;background:#f8f8f8;border:.7px solid #e4e4e4;border-radius:2px 0 0 2px"></div>
<div class="abs" style="left:508.5px;top:225px;width:33px;height:11.5px;background:#f8f8f8;border:.7px solid #e4e4e4;border-left:none;border-radius:0 2px 2px 0"></div>
<svg class="abs" style="left:500px;top:229.5px;" width="5" height="3" viewBox="0 0 5 3"><path d="M.400.400l2 1.900 2-1.900" fill="none" stroke="#c8c8c8" stroke-width=".7"/></svg>
<svg class="abs" style="left:533px;top:229.5px;" width="5" height="3" viewBox="0 0 5 3"><path d="M.400.400l2 1.900 2-1.900" fill="none" stroke="#c8c8c8" stroke-width=".7"/></svg>
<span class="c" style="left:549px;top:226.3px;font-size:7px;color:#b4b4b4;transform:translateX(-50%);">A⁺</span>
<span class="c" style="left:563.5px;top:226.3px;font-size:7px;color:#b4b4b4;transform:translateX(-50%);">A⁻</span>
<svg class="abs" style="left:572.5px;top:226.5px;" width="9" height="8" viewBox="0 0 9 8"><path d="M3.500 6.500L.800 4 4.800.500l3.200 3-3 3zM2 6.800h6.500" fill="none" stroke="#b4b4b4" stroke-width=".8" stroke-linejoin="round"/></svg>
<span class="c" style="left:436.5px;top:239.8px;font-size:7px;color:#b4b4b4;transform:translateX(-50%);font-weight:700">B</span>
<span class="c" style="left:451px;top:239.8px;font-size:7px;color:#b4b4b4;transform:translateX(-50%);font-style:italic;font-family:Liberation Serif,serif">I</span>
<span class="c" style="left:465px;top:239.8px;font-size:7px;color:#b4b4b4;transform:translateX(-50%);text-decoration:underline">U</span>
<span class="c" style="left:479px;top:239.8px;font-size:7px;color:#b4b4b4;transform:translateX(-50%);text-decoration:line-through">A</span>
<span class="c" style="left:493.5px;top:239.8px;font-size:7px;color:#b4b4b4;transform:translateX(-50%);">S</span>
<span class="c" style="left:508.5px;top:240.1px;font-size:6.5px;color:#b4b4b4;transform:translateX(-50%);">X²</span>
<svg class="abs" style="left:516.5px;top:243.5px;" width="4" height="3" viewBox="0 0 4 3"><path d="M0 0h3.600L1.800 2.200z" fill="#bbb"/></svg>
<span class="c" style="left:529px;top:239.3px;font-size:7px;color:#8a8a8a;transform:translateX(-50%);">A</span>
<div class="abs" style="left:525.5px;top:247.5px;width:7.5px;height:1.2px;background:#8a8a8a"></div>
<svg class="abs" style="left:536px;top:243.5px;" width="4" height="3" viewBox="0 0 4 3"><path d="M0 0h3.600L1.800 2.200z" fill="#999"/></svg>
<svg class="abs" style="left:544px;top:239.5px;" width="10" height="9" viewBox="0 0 10 9"><path d="M2 6l3.500-5 2 1.300L4.300 7z" fill="none" stroke="#aaa" stroke-width=".7"/><path d="M.500 8.300h8.500" stroke="#b5b5b5" stroke-width="1"/></svg>
<svg class="abs" style="left:556.5px;top:243.5px;" width="4" height="3" viewBox="0 0 4 3"><path d="M0 0h3.600L1.800 2.200z" fill="#999"/></svg>
<span class="c" style="left:570px;top:239.5px;font-size:7.5px;color:#3c3c3c;transform:translateX(-50%);font-weight:700">雯</span>
<svg class="abs" style="left:577.5px;top:243.5px;" width="4" height="3" viewBox="0 0 4 3"><path d="M0 0h3.600L1.800 2.200z" fill="#444"/></svg>
<svg class="abs" style="left:583px;top:251px;" width="3" height="3" viewBox="0 0 3 3"><path d="M.3 2.700h2.400V.3" fill="none" stroke="#aaa" stroke-width=".6"/></svg>
<div class="abs" style="left:587px;top:223px;width:0.7px;height:29px;background:#dcdcdc"></div>
<svg class="abs" style="left:595.5px;top:227.5px;" width="8" height="7" viewBox="0 0 8 7"><circle cx=".700" cy=".700" r=".600" fill="#b9b9b9"/><circle cx=".700" cy="3.200" r=".600" fill="#b9b9b9"/><circle cx=".700" cy="5.700" r=".600" fill="#b9b9b9"/><path d="M2.300.700h5M2.300 3.200h5M2.300 5.700h5" stroke="#b9b9b9" stroke-width=".8"/></svg>
<svg class="abs" style="left:617px;top:227.5px;" width="8" height="7" viewBox="0 0 8 7"><circle cx=".700" cy=".700" r=".600" fill="#b9b9b9"/><circle cx=".700" cy="3.200" r=".600" fill="#b9b9b9"/><circle cx=".700" cy="5.700" r=".600" fill="#b9b9b9"/><path d="M2.300.700h5M2.300 3.200h5M2.300 5.700h5" stroke="#b9b9b9" stroke-width=".8"/></svg>
<svg class="abs" style="left:637.5px;top:227.5px;" width="8" height="7" viewBox="0 0 8 7"><path d="M0 .500h7M2.500 3h4.500M0 5.500h7" stroke="#b9b9b9" stroke-width=".8"/><path d="M.200 2.200l1.300.8-1.300.8z" fill="#b9b9b9"/></svg>
<svg class="abs" style="left:652px;top:227.5px;" width="8" height="7" viewBox="0 0 8 7"><path d="M0 .500h7M2.500 3h4.500M0 5.500h7" stroke="#b9b9b9" stroke-width=".8"/><path d="M.200 2.200l1.300.8-1.300.8z" fill="#b9b9b9"/></svg>
<svg class="abs" style="left:606.5px;top:230.0px;" width="4" height="3" viewBox="0 0 4 3"><path d="M0 0h3.600L1.800 2.200z" fill="#aaa"/></svg>
<svg class="abs" style="left:627.5px;top:230.0px;" width="4" height="3" viewBox="0 0 4 3"><path d="M0 0h3.600L1.800 2.200z" fill="#aaa"/></svg>
<div class="abs" style="left:664px;top:225.5px;width:0.7px;height:9px;background:#cfcfcf"></div>
<span class="c" style="left:672px;top:226.9px;font-size:6px;color:#aaa;transform:translateX(-50%);text-decoration:overline underline">ab</span>
<svg class="abs" style="left:680px;top:230.0px;" width="4" height="3" viewBox="0 0 4 3"><path d="M0 0h3.600L1.800 2.200z" fill="#aaa"/></svg>
<span class="c" style="left:699px;top:226.6px;font-size:6.5px;color:#aaa;transform:translateX(-50%);">⇵A</span>
<svg class="abs" style="left:707.5px;top:230.0px;" width="4" height="3" viewBox="0 0 4 3"><path d="M0 0h3.600L1.800 2.200z" fill="#aaa"/></svg>
<svg class="abs" style="left:715.5px;top:226.5px;" width="10" height="9" viewBox="0 0 10 9"><rect x=".500" y=".500" width="5" height="4" fill="none" stroke="#b9b9b9" stroke-width=".8"/><rect x="3.500" y="3.500" width="5.500" height="4.500" fill="#f3f3f3" stroke="#b9b9b9" stroke-width=".8"/></svg>
<svg class="abs" style="left:594.5px;top:241px;" width="8" height="7" viewBox="0 0 8 7"><path d="M0 .500h7M0 3h7M0 5.500h7" stroke="#b9b9b9" stroke-width=".8"/></svg>
<svg class="abs" style="left:609px;top:241px;" width="8" height="7" viewBox="0 0 8 7"><path d="M0 .500h7M1.500 3h4M0 5.500h7" stroke="#b9b9b9" stroke-width=".8"/></svg>
<svg class="abs" style="left:623px;top:241px;" width="8" height="7" viewBox="0 0 8 7"><path d="M0 .500h7M0 3h7M0 5.500h7" stroke="#b9b9b9" stroke-width=".8"/></svg>
<svg class="abs" style="left:637.5px;top:241px;" width="8" height="7" viewBox="0 0 8 7"><path d="M0 .500h7M0 3h7M0 5.500h7" stroke="#b9b9b9" stroke-width=".8"/></svg>
<svg class="abs" style="left:652px;top:241px;" width="8" height="7" viewBox="0 0 8 7"><path d="M0 0v6.500M2 0v6.500M4 0v6.500M6.500 0v6.500" stroke="#b9b9b9" stroke-width=".8"/></svg>
<svg class="abs" style="left:666.5px;top:241px;" width="8" height="7" viewBox="0 0 8 7"><circle cx=".700" cy=".700" r=".600" fill="#b9b9b9"/><circle cx=".700" cy="3.200" r=".600" fill="#b9b9b9"/><circle cx=".700" cy="5.700" r=".600" fill="#b9b9b9"/><path d="M2.300.700h5M2.300 3.200h5M2.300 5.700h5" stroke="#b9b9b9" stroke-width=".8"/></svg>
<svg class="abs" style="left:681px;top:241px;" width="8" height="7" viewBox="0 0 8 7"><circle cx=".700" cy=".700" r=".600" fill="#b9b9b9"/><circle cx=".700" cy="3.200" r=".600" fill="#b9b9b9"/><circle cx=".700" cy="5.700" r=".600" fill="#b9b9b9"/><path d="M2.300.700h5M2.300 3.200h5M2.300 5.700h5" stroke="#b9b9b9" stroke-width=".8"/></svg>
<svg class="abs" style="left:696px;top:241px;" width="8" height="7" viewBox="0 0 8 7"><path d="M0 .500h7M2.500 3h4.500M0 5.500h7" stroke="#b9b9b9" stroke-width=".8"/><path d="M.200 2.200l1.300.8-1.300.8z" fill="#b9b9b9"/></svg>
<svg class="abs" style="left:716px;top:241px;" width="8" height="7" viewBox="0 0 8 7"><path d="M0 .500h7M1.500 3h4M0 5.500h7" stroke="#b9b9b9" stroke-width=".8"/></svg>
<svg class="abs" style="left:707.5px;top:243.5px;" width="4" height="3" viewBox="0 0 4 3"><path d="M0 0h3.600L1.800 2.200z" fill="#aaa"/></svg>
<svg class="abs" style="left:727.5px;top:243.5px;" width="4" height="3" viewBox="0 0 4 3"><path d="M0 0h3.600L1.800 2.200z" fill="#aaa"/></svg>
<svg class="abs" style="left:734px;top:251px;" width="3" height="3" viewBox="0 0 3 3"><path d="M.3 2.700h2.400V.3" fill="none" stroke="#aaa" stroke-width=".6"/></svg>
<div class="abs" style="left:738px;top:223px;width:0.7px;height:29px;background:#dcdcdc"></div>
<svg class="abs" style="left:745.5px;top:226px;" width="10" height="9" viewBox="0 0 10 9"><rect x=".500" y=".500" width="6" height="5" fill="none" stroke="#444" stroke-width=".8"/><circle cx="6" cy="5.500" r="2.600" fill="#f3f3f3" stroke="#d9732a" stroke-width=".8"/></svg>
<span class="c" style="left:757px;top:226.7px;font-size:6.3px;color:#2e2e2e;">形状</span>
<svg class="abs" style="left:771px;top:230.0px;" width="4" height="3" viewBox="0 0 4 3"><path d="M0 0h3.600L1.800 2.200z" fill="#555"/></svg>
<svg class="abs" style="left:745.5px;top:239.5px;" width="10" height="9" viewBox="0 0 10 9"><rect x=".500" y=".500" width="8.500" height="7.500" fill="none" stroke="#444" stroke-width=".8"/><path d="M2.800 6.500l1.900-4.500 1.900 4.500M3.400 5h2.600" fill="none" stroke="#444" stroke-width=".7"/></svg>
<span class="c" style="left:757px;top:240.2px;font-size:6.3px;color:#2e2e2e;">文本框</span>
<svg class="abs" style="left:777.5px;top:243.5px;" width="4" height="3" viewBox="0 0 4 3"><path d="M0 0h3.600L1.800 2.200z" fill="#555"/></svg>
<svg class="abs" style="left:787.5px;top:226px;" width="10" height="9" viewBox="0 0 10 9"><rect x=".500" y=".500" width="8.500" height="7.500" fill="none" stroke="#444" stroke-width=".8"/><path d="M1 7l2.500-3 2 2 1.300-1.200 2 2.200" fill="none" stroke="#d9732a" stroke-width=".7"/><circle cx="6.500" cy="2.700" r=".8" fill="#d9732a"/></svg>
<span class="c" style="left:799px;top:226.7px;font-size:6.3px;color:#2e2e2e;">图片</span>
<svg class="abs" style="left:813px;top:230.0px;" width="4" height="3" viewBox="0 0 4 3"><path d="M0 0h3.600L1.800 2.200z" fill="#555"/></svg>
<svg class="abs" style="left:787.5px;top:239.5px;" width="10" height="9" viewBox="0 0 10 9"><rect x=".500" y=".500" width="4.500" height="4.500" rx="1" fill="none" stroke="#3b78d8" stroke-width=".8"/><rect x="3.800" y="3.500" width="5" height="5" rx="1" fill="#f3f3f3" stroke="#444" stroke-width=".8"/></svg>
<span class="c" style="left:799px;top:240.2px;font-size:6.3px;color:#2e2e2e;">排列</span>
<svg class="abs" style="left:813px;top:243.5px;" width="4" height="3" viewBox="0 0 4 3"><path d="M0 0h3.600L1.800 2.200z" fill="#555"/></svg>
<svg class="abs" style="left:823.5px;top:226px;" width="10" height="9" viewBox="0 0 10 9"><circle cx="4.500" cy="2.500" r="1.800" fill="none" stroke="#bbb" stroke-width=".8"/><path d="M1 6.500c0-1.500 1.500-2 3.500-2s3.500.5 3.500 2zM.500 8.200h8" fill="none" stroke="#bbb" stroke-width=".8"/></svg>
<svg class="abs" style="left:835px;top:230.0px;" width="4" height="3" viewBox="0 0 4 3"><path d="M0 0h3.600L1.800 2.200z" fill="#bbb"/></svg>
<svg class="abs" style="left:823.5px;top:239.5px;" width="10" height="9" viewBox="0 0 10 9"><rect x="1.500" y=".500" width="6" height="5.500" fill="none" stroke="#bbb" stroke-width=".8"/><path d="M.500 8h8" stroke="#bbb" stroke-width=".8"/></svg>
<svg class="abs" style="left:835px;top:243.5px;" width="4" height="3" viewBox="0 0 4 3"><path d="M0 0h3.600L1.800 2.200z" fill="#bbb"/></svg>
<svg class="abs" style="left:841.5px;top:251px;" width="3" height="3" viewBox="0 0 3 3"><path d="M.3 2.700h2.400V.3" fill="none" stroke="#aaa" stroke-width=".6"/></svg>
<div class="abs" style="left:845.5px;top:223px;width:0.7px;height:29px;background:#dcdcdc"></div>
<svg class="abs" style="left:853px;top:226.5px;" width="9" height="9" viewBox="0 0 9 9"><circle cx="3.500" cy="3.500" r="2.800" fill="none" stroke="#444" stroke-width=".8"/><path d="M5.600 5.600l2.500 2.500" stroke="#444" stroke-width=".9"/></svg>
<span class="c" style="left:864px;top:226.7px;font-size:6.3px;color:#2e2e2e;">查找</span>
<svg class="abs" style="left:878px;top:230.0px;" width="4" height="3" viewBox="0 0 4 3"><path d="M0 0h3.600L1.800 2.200z" fill="#555"/></svg>
<svg class="abs" style="left:852.5px;top:239.5px;" width="10" height="9" viewBox="0 0 10 9"><rect x=".500" y=".500" width="7.500" height="6.500" fill="none" stroke="#444" stroke-width=".8"/><path d="M2 2.500h4M2 4.500h2.500" stroke="#444" stroke-width=".6"/><path d="M6 4.500l2.800 2.300-1.300.2-.7 1.300z" fill="#3b78d8"/></svg>
<span class="c" style="left:864px;top:240.2px;font-size:6.3px;color:#2e2e2e;">选择</span>
<svg class="abs" style="left:878px;top:243.5px;" width="4" height="3" viewBox="0 0 4 3"><path d="M0 0h3.600L1.800 2.200z" fill="#555"/></svg>
<span class="c" style="left:90px;top:265.7px;font-size:6.4px;color:#2e2e2e;">大纲</span>
<span class="c" style="left:108.5px;top:265.7px;font-size:6.4px;color:#cf6a2a;">幻灯片</span>
<div class="abs" style="left:111px;top:274.5px;width:13px;height:1.1px;background:#cf6a2a"></div>
<svg class="abs" style="left:167px;top:266.5px;" width="4" height="6" viewBox="0 0 4 6"><path d="M3.300.500L.800 3l2.500 2.500" fill="none" stroke="#555" stroke-width=".8"/></svg>
<div class="abs" style="left:182.5px;top:257px;width:0.7px;height:437px;background:#d0d0d0"></div>
<div class="abs" style="left:176.3px;top:458px;width:2.6px;height:124px;background:#c3c3c3;border-radius:1.300px"></div>
<span class="c" style="left:54.3px;top:287.6px;font-size:7.3px;color:#2e2e2e;transform:translateX(-50%)">9</span>
<span class="c" style="left:54.3px;top:354.1px;font-size:7.3px;color:#2e2e2e;transform:translateX(-50%)">10</span>
<span class="c" style="left:54.3px;top:420.6px;font-size:7.3px;color:#2e2e2e;transform:translateX(-50%)">11</span>
<span class="c" style="left:54.3px;top:487.6px;font-size:7.3px;color:#cf6a2a;transform:translateX(-50%)">12</span>
<span class="c" style="left:54.3px;top:554.1px;font-size:7.3px;color:#2e2e2e;transform:translateX(-50%)">13</span>
<span class="c" style="left:54.3px;top:620.1px;font-size:7.3px;color:#2e2e2e;transform:translateX(-50%)">14</span>
<div class="abs" style="left:62px;top:286px;width:104px;height:58.5px;background:#cdb3a3;box-shadow:0 0 1.500px rgba(0,0,0,.18)"></div>
<span class="c" style="left:67px;top:290.1px;font-size:2.55px;color:#2a2f55;font-weight:700">Current technologies for promoting an online store:</span>
<div class="abs" style="left:67px;top:294.2px;width:50px;height:0.7px;background:#5a4a4a;opacity:.42"></div>
<div class="abs" style="left:67px;top:296.53px;width:38px;height:0.7px;background:#5a4a4a;opacity:.42"></div>
<div class="abs" style="left:67px;top:298.86px;width:37px;height:0.7px;background:#5a4a4a;opacity:.42"></div>
<div class="abs" style="left:67px;top:301.19px;width:67px;height:0.7px;background:#5a4a4a;opacity:.42"></div>
<div class="abs" style="left:67px;top:303.52px;width:39px;height:0.7px;background:#5a4a4a;opacity:.42"></div>
<div class="abs" style="left:67px;top:305.84999999999997px;width:22px;height:0.7px;background:#5a4a4a;opacity:.42"></div>
<div class="abs" style="left:67px;top:308.18px;width:29px;height:0.7px;background:#5a4a4a;opacity:.42"></div>
<div class="abs" style="left:67px;top:310.51px;width:11px;height:0.7px;background:#5a4a4a;opacity:.42"></div>
<div class="abs" style="left:67px;top:312.84px;width:11px;height:0.7px;background:#5a4a4a;opacity:.42"></div>
<div class="abs" style="left:67px;top:315.16999999999996px;width:13px;height:0.7px;background:#5a4a4a;opacity:.42"></div>
<span class="c" style="left:67px;top:318.7px;font-size:2.55px;color:#2a2f55;font-weight:700">For online stores, the following tools are most often</span>
<span class="c" style="left:67px;top:321.8px;font-size:2.55px;color:#2a2f55;font-weight:700">implemented:</span>
<div class="abs" style="left:67px;top:326.0px;width:28px;height:0.7px;background:#5a4a4a;opacity:.42"></div>
<div class="abs" style="left:67px;top:328.4px;width:13px;height:0.7px;background:#5a4a4a;opacity:.42"></div>
<div class="abs" style="left:67px;top:330.8px;width:30px;height:0.7px;background:#5a4a4a;opacity:.42"></div>
<div class="abs" style="left:67px;top:333.2px;width:23px;height:0.7px;background:#5a4a4a;opacity:.42"></div>
<div class="abs" style="left:66px;top:341.5px;width:7px;height:0.6px;background:#8a7a74;opacity:.5"></div>
<div class="abs" style="left:160.5px;top:341.5px;width:1px;height:0.6px;background:#8a7a74;opacity:.5"></div>
<div class="abs" style="left:62px;top:353px;width:104px;height:58px;background:#ccb2a2;box-shadow:0 0 1.500px rgba(0,0,0,.18)"></div>
<div class="abs" style="left:72.2px;top:368.5px;width:64.8px;height:0.8px;background:#7a4aa0;opacity:.36"></div>
<div class="abs" style="left:68.3px;top:372.7px;width:73.7px;height:0.8px;background:#7a4aa0;opacity:.36"></div>
<div class="abs" style="left:68.3px;top:376.6px;width:60.7px;height:0.8px;background:#6a5a6a;opacity:.36"></div>
<div class="abs" style="left:68.3px;top:380.3px;width:73.7px;height:0.8px;background:#7a4aa0;opacity:.36"></div>
<div class="abs" style="left:68.3px;top:384.2px;width:73.7px;height:0.8px;background:#6a5a6a;opacity:.36"></div>
<div class="abs" style="left:68.3px;top:388.1px;width:19.1px;height:0.8px;background:#6a5a6a;opacity:.36"></div>
<div class="abs" style="left:62px;top:403.5px;width:55px;height:0.8px;background:#4a3f3f"></div>
<svg class="abs" style="left:116px;top:402.4px;" width="3" height="3" viewBox="0 0 3 3"><path d="M0 0l2.500 1.500L0 3z" fill="#4a3f3f"/></svg>
<div class="abs" style="left:62px;top:418.5px;width:104px;height:58.5px;background:#dbd9d3;box-shadow:0 0 1.500px rgba(0,0,0,.18)"></div>
<div class="abs" style="left:70.3px;top:423.3px;width:38.7px;height:23.2px;background:#f4f4f4"></div>
<svg class="abs" style="left:81.5px;top:425.1px;" width="21" height="21" viewBox="0 0 21 21"><g fill="none" stroke-width="4.600"><circle cx="10.500" cy="10.500" r="8" stroke="#cfae9f"/><path d="M10.500 2.500A8 8 0 0 1 18.200 8.300" stroke="#e6e1da"/><path d="M18.300 8.800A8 8 0 0 1 13 18.100" stroke="#c0907f"/><path d="M2.900 8A8 8 0 0 1 10 2.500" stroke="#c56f4c"/></g></svg>
<div class="abs" style="left:64.8px;top:433px;width:0.7px;height:40px;background:#555"></div>
<div class="abs" style="left:68px;top:450.8px;width:45px;height:0.6px;background:#777;opacity:.6"></div>
<div class="abs" style="left:120px;top:444.5px;width:6.7px;height:20.0px;background:#d5586a"></div>
<div class="abs" style="left:135.3px;top:447px;width:6.7px;height:17.5px;background:#d5586a"></div>
<div class="abs" style="left:150.3px;top:442px;width:6.7px;height:22.5px;background:#d5586a"></div>
<div class="abs" style="left:126.5px;top:461.5px;width:4.5px;height:3.0px;background:#c0806c"></div>
<div class="abs" style="left:141.5px;top:459.5px;width:4.5px;height:5.0px;background:#c0806c"></div>
<div class="abs" style="left:156.5px;top:463.3px;width:4.5px;height:1.1999999999999886px;background:#c0806c"></div>
<div class="abs" style="left:118px;top:464.5px;width:45px;height:0.6px;background:#666"></div>
<div class="abs" style="left:112px;top:468.5px;width:48px;height:0.6px;background:#777;opacity:.6"></div>
<div class="abs" style="left:112px;top:470.5px;width:8px;height:0.6px;background:#777;opacity:.6"></div>
<span class="c" style="left:137px;top:434.5px;font-size:1.6px;color:#555;">In the 50% ...</span>
<div class="abs" style="left:60.8px;top:484.8px;width:106.4px;height:60.2px;border:1.200px solid #d9732a;border-radius:2px;background:#dbd9d3"></div>
<div class="abs" style="left:67.6px;top:489.9px;width:45.7px;height:33.7px;background:#f4f4f4"></div>
<div class="abs" style="left:64.6px;top:501.3px;width:0.7px;height:38.7px;background:#555"></div>
<div class="abs" style="left:90.6px;top:498.7px;width:6.6px;height:2.5px;background:#dcd9d3"></div>
<div class="abs" style="left:97.2px;top:498.7px;width:7.7px;height:2.5px;background:#b98274"></div>
<div class="abs" style="left:104.9px;top:498.7px;width:7.3px;height:2.5px;background:#ceb0a3"></div>
<div class="abs" style="left:79.0px;top:499.5px;width:10.8px;height:0.7px;background:#666;opacity:.55"></div>
<div class="abs" style="left:90.6px;top:502.8px;width:6.5px;height:2.5px;background:#dcd9d3"></div>
<div class="abs" style="left:97.1px;top:502.8px;width:7.1px;height:2.5px;background:#b98274"></div>
<div class="abs" style="left:104.3px;top:502.8px;width:7.9px;height:2.5px;background:#ceb0a3"></div>
<div class="abs" style="left:79.0px;top:503.6px;width:10.8px;height:0.7px;background:#666;opacity:.55"></div>
<div class="abs" style="left:90.6px;top:506.9px;width:7.0px;height:2.5px;background:#dcd9d3"></div>
<div class="abs" style="left:97.6px;top:506.9px;width:5.8px;height:2.5px;background:#b98274"></div>
<div class="abs" style="left:103.4px;top:506.9px;width:8.8px;height:2.5px;background:#ceb0a3"></div>
<div class="abs" style="left:79.0px;top:507.7px;width:10.8px;height:0.7px;background:#666;opacity:.55"></div>
<div class="abs" style="left:90.6px;top:511.0px;width:7.2px;height:2.5px;background:#dcd9d3"></div>
<div class="abs" style="left:97.8px;top:511.0px;width:6.6px;height:2.5px;background:#b98274"></div>
<div class="abs" style="left:104.4px;top:511.0px;width:7.8px;height:2.5px;background:#ceb0a3"></div>
<div class="abs" style="left:79.0px;top:511.8px;width:10.8px;height:0.7px;background:#666;opacity:.55"></div>
<div class="abs" style="left:90.6px;top:515.1px;width:6.4px;height:2.5px;background:#dcd9d3"></div>
<div class="abs" style="left:97.0px;top:515.1px;width:8.1px;height:2.5px;background:#b98274"></div>
<div class="abs" style="left:105.2px;top:515.1px;width:7.0px;height:2.5px;background:#ceb0a3"></div>
<div class="abs" style="left:79.0px;top:515.9px;width:10.8px;height:0.7px;background:#666;opacity:.55"></div>
<div class="abs" style="left:90.6px;top:519.1px;width:7.5px;height:2.5px;background:#dcd9d3"></div>
<div class="abs" style="left:98.1px;top:519.1px;width:7.0px;height:2.5px;background:#b98274"></div>
<div class="abs" style="left:105.1px;top:519.1px;width:7.1px;height:2.5px;background:#ceb0a3"></div>
<div class="abs" style="left:79.0px;top:519.9px;width:10.8px;height:0.7px;background:#666;opacity:.55"></div>
<div class="abs" style="left:76.3px;top:492.0px;width:15.6px;height:0.7px;background:#666;opacity:.5"></div>
<div class="abs" style="left:76.3px;top:494.5px;width:17.7px;height:0.7px;background:#666;opacity:.5"></div>
<div class="abs" style="left:76.3px;top:497.0px;width:29.0px;height:0.7px;background:#666;opacity:.5"></div>
<div class="abs" style="left:146.9px;top:501.5px;width:10.1px;height:2.9px;background:#bf8a7c"></div>
<div class="abs" style="left:157.0px;top:501.5px;width:5.1px;height:2.9px;background:#d1b3a7"></div>
<div class="abs" style="left:116.8px;top:502.8px;width:21.4px;height:0.7px;background:#555;opacity:.6"></div>
<div class="abs" style="left:142.0px;top:502.8px;width:2px;height:0.7px;background:#555;opacity:.6"></div>
<div class="abs" style="left:146.9px;top:505.3px;width:6.1px;height:2.9px;background:#bf8a7c"></div>
<div class="abs" style="left:152.9px;top:505.3px;width:9.2px;height:2.9px;background:#d1b3a7"></div>
<div class="abs" style="left:122.8px;top:506.6px;width:15.5px;height:0.7px;background:#555;opacity:.6"></div>
<div class="abs" style="left:142.0px;top:506.6px;width:2px;height:0.7px;background:#555;opacity:.6"></div>
<div class="abs" style="left:146.9px;top:508.9px;width:9.5px;height:2.9px;background:#bf8a7c"></div>
<div class="abs" style="left:156.4px;top:508.9px;width:5.7px;height:2.9px;background:#d1b3a7"></div>
<div class="abs" style="left:132.1px;top:510.2px;width:6.1px;height:0.7px;background:#555;opacity:.6"></div>
<div class="abs" style="left:142.0px;top:510.2px;width:2px;height:0.7px;background:#555;opacity:.6"></div>
<div class="abs" style="left:146.9px;top:512.7px;width:10.1px;height:2.9px;background:#bf8a7c"></div>
<div class="abs" style="left:157.0px;top:512.7px;width:5.1px;height:2.9px;background:#d1b3a7"></div>
<div class="abs" style="left:118.1px;top:513.9px;width:20.2px;height:0.7px;background:#555;opacity:.6"></div>
<div class="abs" style="left:142.0px;top:513.9px;width:2px;height:0.7px;background:#555;opacity:.6"></div>
<div class="abs" style="left:146.9px;top:516.3px;width:9.1px;height:2.9px;background:#bf8a7c"></div>
<div class="abs" style="left:156.0px;top:516.3px;width:6.1px;height:2.9px;background:#d1b3a7"></div>
<div class="abs" style="left:115.7px;top:517.6px;width:22.6px;height:0.7px;background:#555;opacity:.6"></div>
<div class="abs" style="left:142.0px;top:517.6px;width:2px;height:0.7px;background:#555;opacity:.6"></div>
<div class="abs" style="left:146.9px;top:520.0px;width:5.0px;height:2.9px;background:#bf8a7c"></div>
<div class="abs" style="left:151.9px;top:520.0px;width:10.2px;height:2.9px;background:#d1b3a7"></div>
<div class="abs" style="left:123.7px;top:521.3px;width:14.5px;height:0.7px;background:#555;opacity:.6"></div>
<div class="abs" style="left:142.0px;top:521.3px;width:2px;height:0.7px;background:#555;opacity:.6"></div>
<div class="abs" style="left:146.9px;top:523.7px;width:5.0px;height:2.9px;background:#bf8a7c"></div>
<div class="abs" style="left:151.9px;top:523.7px;width:10.2px;height:2.9px;background:#d1b3a7"></div>
<div class="abs" style="left:115.7px;top:525.0px;width:22.6px;height:0.7px;background:#555;opacity:.6"></div>
<div class="abs" style="left:142.0px;top:525.0px;width:2px;height:0.7px;background:#555;opacity:.6"></div>
<div class="abs" style="left:146.9px;top:527.4px;width:7.5px;height:2.9px;background:#bf8a7c"></div>
<div class="abs" style="left:154.4px;top:527.4px;width:7.7px;height:2.9px;background:#d1b3a7"></div>
<div class="abs" style="left:130.2px;top:528.7px;width:8.1px;height:0.7px;background:#555;opacity:.6"></div>
<div class="abs" style="left:142.0px;top:528.7px;width:2px;height:0.7px;background:#555;opacity:.6"></div>
<div class="abs" style="left:146.9px;top:531.1px;width:5.7px;height:2.9px;background:#bf8a7c"></div>
<div class="abs" style="left:152.5px;top:531.1px;width:9.6px;height:2.9px;background:#d1b3a7"></div>
<div class="abs" style="left:131.8px;top:532.4px;width:6.4px;height:0.7px;background:#555;opacity:.6"></div>
<div class="abs" style="left:142.0px;top:532.4px;width:2px;height:0.7px;background:#555;opacity:.6"></div>
<div class="abs" style="left:139.0px;top:501.0px;width:0.5px;height:33.4px;background:#777"></div>
<div class="abs" style="left:133.5px;top:498.8px;width:11.5px;height:0.7px;background:#666;opacity:.6"></div>
<div class="abs" style="left:67.6px;top:526.9px;width:45.8px;height:0.7px;background:#555;opacity:.6"></div>
<div class="abs" style="left:67.6px;top:529.2px;width:45.1px;height:0.7px;background:#555;opacity:.6"></div>
<div class="abs" style="left:67.6px;top:531.5px;width:7.3px;height:0.7px;background:#555;opacity:.6"></div>
<div class="abs" style="left:111.9px;top:538.4px;width:48.7px;height:0.7px;background:#555;opacity:.6"></div>
<div class="abs" style="left:111.9px;top:540.7px;width:12.1px;height:0.7px;background:#555;opacity:.6"></div>
<div class="abs" style="left:72px;top:538px;width:12px;height:12px;border-radius:50%;background:rgba(240,236,232,.92);box-shadow:0 0 1.500px rgba(0,0,0,.25)"></div>
<svg class="abs" style="left:76px;top:541px;" width="5" height="6" viewBox="0 0 5 6"><path d="M.300.300l4.200 2.700L.300 5.700z" fill="#e88a4a"/></svg>
<div class="abs" style="left:122.6px;top:538px;width:12px;height:12px;border-radius:50%;background:rgba(226,140,90,.82)"></div>
<svg class="abs" style="left:125.6px;top:541px;" width="6" height="6" viewBox="0 0 6 6"><path d="M.500 5.500l5-5M.500.500l5 5" stroke="#f6d9c6" stroke-width=".9"/></svg>
<div class="abs" style="left:143.5px;top:538px;width:12px;height:12px;border-radius:50%;background:rgba(226,140,90,.82)"></div>
<svg class="abs" style="left:146.5px;top:541px;" width="6" height="6" viewBox="0 0 6 6"><path d="M3 .300v5.400M.300 3h5.400" stroke="#fbe9dc" stroke-width="1"/></svg>
<svg class="abs" style="left:113.5px;top:499.5px;" width="6" height="9" viewBox="0 0 6 9"><path d="M.500.500v7l1.700-1.600 1.200 2.600 1-.5-1.200-2.500h2.300z" fill="#fff" stroke="#222" stroke-width=".6" stroke-linejoin="round"/></svg>
<div class="abs" style="left:62px;top:553px;width:104px;height:57px;background:#dbd9d3;box-shadow:0 0 1.500px rgba(0,0,0,.18)"></div>
<div class="abs" style="left:66.9px;top:555.5px;width:50.3px;height:37.7px;background:#f4f4f4"></div>
<div class="abs" style="left:68.3px;top:559px;width:5px;height:15.4px;background:#d1b1a2;border-radius:.5px"></div>
<div class="abs" style="left:70.5px;top:576px;width:0.6px;height:14px;background:#555;opacity:.6"></div>
<div class="abs" style="left:74.6px;top:559px;width:5px;height:15.4px;background:#c98f73;border-radius:.5px"></div>
<div class="abs" style="left:74.6px;top:560px;width:5px;height:3.5px;background:#c5643c"></div>
<div class="abs" style="left:74.6px;top:567px;width:5px;height:2.5px;background:#a9573a"></div>
<div class="abs" style="left:76.8px;top:576px;width:0.6px;height:6px;background:#555;opacity:.6"></div>
<div class="abs" style="left:81.5px;top:559px;width:5px;height:15.4px;background:#c98f73;border-radius:.5px"></div>
<div class="abs" style="left:81.5px;top:560px;width:5px;height:3.5px;background:#c5643c"></div>
<div class="abs" style="left:81.5px;top:567px;width:5px;height:2.5px;background:#a9573a"></div>
<div class="abs" style="left:83.7px;top:576px;width:0.6px;height:10px;background:#555;opacity:.6"></div>
<div class="abs" style="left:88.5px;top:559px;width:5px;height:15.4px;background:#c98f73;border-radius:.5px"></div>
<div class="abs" style="left:88.5px;top:560px;width:5px;height:3.5px;background:#c5643c"></div>
<div class="abs" style="left:88.5px;top:567px;width:5px;height:2.5px;background:#a9573a"></div>
<div class="abs" style="left:90.7px;top:576px;width:0.6px;height:8px;background:#555;opacity:.6"></div>
<div class="abs" style="left:95.2px;top:559px;width:5px;height:15.4px;background:#c98f73;border-radius:.5px"></div>
<div class="abs" style="left:95.2px;top:560px;width:5px;height:3.5px;background:#c5643c"></div>
<div class="abs" style="left:95.2px;top:567px;width:5px;height:2.5px;background:#a9573a"></div>
<div class="abs" style="left:97.4px;top:576px;width:0.6px;height:16px;background:#555;opacity:.6"></div>
<div class="abs" style="left:102.1px;top:559px;width:5px;height:15.4px;background:#c98f73;border-radius:.5px"></div>
<div class="abs" style="left:102.1px;top:560px;width:5px;height:3.5px;background:#c5643c"></div>
<div class="abs" style="left:102.1px;top:567px;width:5px;height:2.5px;background:#a9573a"></div>
<div class="abs" style="left:104.3px;top:576px;width:0.6px;height:9px;background:#555;opacity:.6"></div>
<div class="abs" style="left:108.8px;top:559px;width:5px;height:15.4px;background:#d1b1a2;border-radius:.5px"></div>
<div class="abs" style="left:111.0px;top:576px;width:0.6px;height:4px;background:#555;opacity:.6"></div>
<div class="abs" style="left:64.8px;top:567px;width:0.7px;height:40px;background:#555"></div>
<div class="abs" style="left:67px;top:596.0px;width:48px;height:0.6px;background:#666;opacity:.6"></div>
<div class="abs" style="left:67px;top:598.2px;width:46px;height:0.6px;background:#666;opacity:.6"></div>
<div class="abs" style="left:67px;top:600.4px;width:12px;height:0.6px;background:#666;opacity:.6"></div>
<div class="abs" style="left:119px;top:566.5px;width:46px;height:0.6px;background:#666;opacity:.55"></div>
<div class="abs" style="left:119px;top:568.8px;width:46px;height:0.6px;background:#666;opacity:.55"></div>
<div class="abs" style="left:119px;top:571.1px;width:46px;height:0.6px;background:#666;opacity:.55"></div>
<div class="abs" style="left:119px;top:573.4px;width:46px;height:0.6px;background:#666;opacity:.55"></div>
<svg class="abs" style="left:118px;top:580px;" width="44" height="12" viewBox="0 0 44 12"><path d="M1 9L8 6l7 3 7-5 7 3 6-4 7 3" fill="none" stroke="#3da56a" stroke-width="1.600"/><path d="M1 10l7-2 7 2 7-4 7 2 6-3 7 3" fill="none" stroke="#b98274" stroke-width=".8"/></svg>
<div class="abs" style="left:116px;top:594.3px;width:46px;height:0.6px;background:#666"></div>
<div class="abs" style="left:118.5px;top:595.5px;width:0.6px;height:11px;background:#555;opacity:.65"></div>
<div class="abs" style="left:124.8px;top:595.5px;width:0.6px;height:10px;background:#555;opacity:.65"></div>
<div class="abs" style="left:131.1px;top:595.5px;width:0.6px;height:4px;background:#555;opacity:.65"></div>
<div class="abs" style="left:137.4px;top:595.5px;width:0.6px;height:9px;background:#555;opacity:.65"></div>
<div class="abs" style="left:143.7px;top:595.5px;width:0.6px;height:9px;background:#555;opacity:.65"></div>
<div class="abs" style="left:150.0px;top:595.5px;width:0.6px;height:4px;background:#555;opacity:.65"></div>
<div class="abs" style="left:156.3px;top:595.5px;width:0.6px;height:3px;background:#555;opacity:.65"></div>
<div class="abs" style="left:62px;top:618.4px;width:104px;height:53px;background:#dbd9d3;box-shadow:0 0 1.500px rgba(0,0,0,.18)"></div>
<div class="abs" style="left:66.9px;top:621.6px;width:49.7px;height:23.7px;background:#f4f4f4"></div>
<div class="abs" style="left:69.5px;top:634.3px;width:5px;height:7px;background:#3f7fb5"></div>
<div class="abs" style="left:69.5px;top:634.3px;width:5px;height:4.34px;background:#6aaa4a"></div>
<div class="abs" style="left:69.5px;top:634.3px;width:5px;height:2.66px;background:#f0a030"></div>
<div class="abs" style="left:77.3px;top:632.3px;width:5px;height:9px;background:#3f7fb5"></div>
<div class="abs" style="left:77.3px;top:632.3px;width:5px;height:5.58px;background:#6aaa4a"></div>
<div class="abs" style="left:77.3px;top:632.3px;width:5px;height:3.42px;background:#f0a030"></div>
<div class="abs" style="left:85.3px;top:627.8px;width:5px;height:13.5px;background:#3f7fb5"></div>
<div class="abs" style="left:85.3px;top:627.8px;width:5px;height:8.37px;background:#6aaa4a"></div>
<div class="abs" style="left:85.3px;top:627.8px;width:5px;height:5.13px;background:#f0a030"></div>
<div class="abs" style="left:93px;top:634.3px;width:5px;height:7px;background:#3f7fb5"></div>
<div class="abs" style="left:93px;top:634.3px;width:5px;height:4.34px;background:#6aaa4a"></div>
<div class="abs" style="left:93px;top:634.3px;width:5px;height:2.66px;background:#f0a030"></div>
<div class="abs" style="left:108.8px;top:636.3px;width:5px;height:5px;background:#3f7fb5"></div>
<div class="abs" style="left:108.8px;top:636.3px;width:5px;height:3.1px;background:#6aaa4a"></div>
<div class="abs" style="left:108.8px;top:636.3px;width:5px;height:1.9px;background:#f0a030"></div>
<div class="abs" style="left:100.5px;top:640.5px;width:5px;height:0.8px;background:#777"></div>
<div class="abs" style="left:64.8px;top:622px;width:0.7px;height:49px;background:#555"></div>
<div class="abs" style="left:67px;top:649.3px;width:47px;height:0.6px;background:#666;opacity:.6"></div>
<div class="abs" style="left:67px;top:651.5px;width:38px;height:0.6px;background:#666;opacity:.6"></div>
<div class="abs" style="left:118px;top:631.3px;width:46px;height:0.6px;background:#666;opacity:.55"></div>
<div class="abs" style="left:118px;top:633.5999999999999px;width:44px;height:0.6px;background:#666;opacity:.55"></div>
<div class="abs" style="left:118px;top:635.9px;width:14px;height:0.6px;background:#666;opacity:.55"></div>
<div class="abs" style="left:115px;top:640.4px;width:50.4px;height:29.8px;background:#f4f4f4"></div>
<svg class="abs" style="left:117px;top:642px;" width="47" height="27" viewBox="0 0 47 27"><path d="M5 12l10-7 14 17 14 3" fill="none" stroke="#f0a030" stroke-width=".9"/><path d="M5 16l10-8 14 16 14 2" fill="none" stroke="#5aa0d0" stroke-width=".9"/><path d="M5 8l10 0 14 14 14 2" fill="none" stroke="#7ab85a" stroke-width=".9"/><path d="M5 19l10-13 14 15 14 3" fill="none" stroke="#e8c060" stroke-width=".8"/></svg>
<svg class="abs" style="left:107.3px;top:679px;" width="6" height="6" viewBox="0 0 6 6"><path d="M3 0v6M0 3h6" stroke="#2e2e2e" stroke-width=".9"/></svg>
<div class="abs" style="left:183.2px;top:257px;width:676px;height:423px;background:#dadada"></div>
<svg class="abs" style="left:186.5px;top:673.5px;" width="3" height="4" viewBox="0 0 3 4"><path d="M2.600.300L.400 2l2.200 1.700z" fill="#555"/></svg>
<div class="abs" style="left:195px;top:673.5px;width:635px;height:4px;background:#c6c6c6;border-radius:2px"></div>
<svg class="abs" style="left:844.5px;top:673.5px;" width="3" height="4" viewBox="0 0 3 4"><path d="M.400.300L2.600 2 .400 3.700z" fill="#555"/></svg>
<div class="abs" style="left:852.8px;top:496px;width:2.6px;height:27px;background:#c0c0c0;border-radius:1.300px"></div>
<svg class="abs" style="left:853px;top:655.5px;" width="3" height="3" viewBox="0 0 3 3"><path d="M.200.500h2.600L1.500 2.600z" fill="#555"/></svg>
<svg class="abs" style="left:853px;top:663px;" width="3" height="4" viewBox="0 0 3 4"><path d="M.300 2l1.200-1.600L2.700 2zM.300 2.300h2.400L1.500 3.900z" fill="#555"/></svg>
<svg class="abs" style="left:853px;top:670px;" width="3" height="4" viewBox="0 0 3 4"><path d="M.300.300h2.400L1.500 1.900zM.300 2.200h2.400L1.500 3.800z" fill="#555"/></svg>
<svg class="abs" style="left:852.8px;top:259px;" width="3" height="3" viewBox="0 0 3 3"><path d="M.200 2.500h2.600L1.500.400z" fill="#555"/></svg>
<div class="abs" style="left:183.2px;top:679.3px;width:676px;height:0.7px;background:#cfcfcf"></div>
<span class="c" style="left:188.5px;top:683.7px;font-size:6.8px;color:#8f8f8f;">单击此处添加备注</span>
<div class="abs" style="left:194.5px;top:282.6px;width:645.1px;height:363.4px;background:#dbd9d4;box-shadow:0 0 2px rgba(0,0,0,.18)"></div>
<span class="c" style="left:212.600px;top:331.600px;font-size:8px;color:#5a5a5a;transform:translate(-50%,-50%) rotate(-90deg);letter-spacing:0">Presentation title</span>
<div class="abs" style="left:212.2px;top:376px;width:0.8px;height:241px;background:#3a3a3a"></div>
<div class="abs" style="left:210.9px;top:374.3px;width:3.4px;height:3.4px;background:#2e2e2e;border-radius:50%"></div>
<div class="abs" style="left:210.9px;top:615.3px;width:3.4px;height:3.4px;background:#2e2e2e;border-radius:50%"></div>
<span class="c" style="left:212.400px;top:625.500px;font-size:7.500px;color:#4a4a4a;transform:translateX(-50%)">12</span>
<div class="abs" style="left:229px;top:305.8px;width:283.7px;height:208.9px;background:#f4f4f4"></div>
<div class="abs" style="left:371.6px;top:357px;width:0.6px;height:152px;background:#dedede"></div>
<div class="abs" style="left:275px;top:317.8px;width:5.4px;height:5.4px;background:#dcdbd8"></div>
<span class="sf" style="left:283.3px;top:315.9px;font-size:8px;color:#262626;">We live paycheck to paycheck</span>
<div class="abs" style="left:275px;top:333.3px;width:5.4px;height:5.4px;background:#b5776b"></div>
<span class="sf" style="left:283.3px;top:331.4px;font-size:8px;color:#262626;">We basically have enough money</span>
<div class="abs" style="left:275px;top:348.8px;width:5.4px;height:5.4px;background:#cfaea2"></div>
<span class="sf" style="left:283.3px;top:346.9px;font-size:8px;color:#262626;">Buying most durable goods does not cause us difficulties</span>
<div class="abs" style="left:372px;top:360.3px;width:41px;height:15.3px;background:#dcd9d3"></div>
<span class="sf" style="left:392.5px;top:363.6px;font-size:8px;color:#3a302e;transform:translateX(-50%);">3.50</span>
<div class="abs" style="left:413px;top:360.3px;width:47.6px;height:15.3px;background:#b98274"></div>
<span class="sf" style="left:436.8px;top:363.6px;font-size:8px;color:#3a302e;transform:translateX(-50%);">4.00</span>
<div class="abs" style="left:460.6px;top:360.3px;width:45.1px;height:15.3px;background:#ceb0a3"></div>
<span class="sf" style="left:483.1px;top:363.6px;font-size:8px;color:#3a302e;transform:translateX(-50%);">3.80</span>
<div class="abs" style="left:372px;top:385.6px;width:40.4px;height:15.3px;background:#dcd9d3"></div>
<span class="sf" style="left:392.2px;top:388.9px;font-size:8px;color:#3a302e;transform:translateX(-50%);">3.50</span>
<div class="abs" style="left:412.4px;top:385.6px;width:44.2px;height:15.3px;background:#b98274"></div>
<span class="sf" style="left:434.5px;top:388.9px;font-size:8px;color:#3a302e;transform:translateX(-50%);">3.78</span>
<div class="abs" style="left:456.6px;top:385.6px;width:49.1px;height:15.3px;background:#ceb0a3"></div>
<span class="sf" style="left:481.1px;top:388.9px;font-size:8px;color:#3a302e;transform:translateX(-50%);">4.20</span>
<span class="sf" style="left:367.4px;top:388.9px;font-size:8px;color:#262626;transform:translateX(-100%);">Compared prices</span>
<div class="abs" style="left:372px;top:411px;width:43.4px;height:15.3px;background:#dcd9d3"></div>
<span class="sf" style="left:393.7px;top:414.3px;font-size:8px;color:#3a302e;transform:translateX(-50%);">3.50</span>
<div class="abs" style="left:415.4px;top:411px;width:35.9px;height:15.3px;background:#b98274"></div>
<span class="sf" style="left:433.4px;top:414.3px;font-size:8px;color:#3a302e;transform:translateX(-50%);">2.89</span>
<div class="abs" style="left:451.3px;top:411px;width:54.4px;height:15.3px;background:#ceb0a3"></div>
<span class="sf" style="left:478.5px;top:414.3px;font-size:8px;color:#3a302e;transform:translateX(-50%);">4.40</span>
<span class="sf" style="left:367.4px;top:414.3px;font-size:8px;color:#262626;transform:translateX(-100%);">Looked at product reviews</span>
<div class="abs" style="left:372px;top:436.4px;width:44.4px;height:15.3px;background:#dcd9d3"></div>
<span class="sf" style="left:394.2px;top:439.7px;font-size:8px;color:#3a302e;transform:translateX(-50%);">3.50</span>
<div class="abs" style="left:416.4px;top:436.4px;width:41.2px;height:15.3px;background:#b98274"></div>
<span class="sf" style="left:437.0px;top:439.7px;font-size:8px;color:#3a302e;transform:translateX(-50%);">3.22</span>
<div class="abs" style="left:457.6px;top:436.4px;width:48.1px;height:15.3px;background:#ceb0a3"></div>
<span class="sf" style="left:481.6px;top:439.7px;font-size:8px;color:#3a302e;transform:translateX(-50%);">3.80</span>
<span class="sf" style="left:367.4px;top:439.7px;font-size:8px;color:#262626;transform:translateX(-100%);">read product reviews</span>
<div class="abs" style="left:372px;top:462px;width:39.8px;height:15.3px;background:#dcd9d3"></div>
<span class="sf" style="left:391.9px;top:465.3px;font-size:8px;color:#3a302e;transform:translateX(-50%);">3.50</span>
<div class="abs" style="left:411.8px;top:462px;width:50.4px;height:15.3px;background:#b98274"></div>
<span class="sf" style="left:437.0px;top:465.3px;font-size:8px;color:#3a302e;transform:translateX(-50%);">4.44</span>
<div class="abs" style="left:462.2px;top:462px;width:43.5px;height:15.3px;background:#ceb0a3"></div>
<span class="sf" style="left:483.9px;top:465.3px;font-size:8px;color:#3a302e;transform:translateX(-50%);">3.80</span>
<span class="sf" style="left:367.4px;top:465.3px;font-size:8px;color:#262626;transform:translateX(-100%);">got acquainted with the assortment</span>
<div class="abs" style="left:372px;top:486.8px;width:46.4px;height:15.3px;background:#dcd9d3"></div>
<span class="sf" style="left:395.2px;top:490.1px;font-size:8px;color:#3a302e;transform:translateX(-50%);">2.50</span>
<div class="abs" style="left:418.4px;top:486.8px;width:43.2px;height:15.3px;background:#b98274"></div>
<span class="sf" style="left:440.0px;top:490.1px;font-size:8px;color:#3a302e;transform:translateX(-50%);">2.33</span>
<div class="abs" style="left:461.6px;top:486.8px;width:44.1px;height:15.3px;background:#ceb0a3"></div>
<span class="sf" style="left:483.6px;top:490.1px;font-size:8px;color:#3a302e;transform:translateX(-50%);">2.40</span>
<span class="sf" style="left:367.4px;top:490.1px;font-size:8px;color:#262626;transform:translateX(-100%);">made purchases</span>
<span class="sf" style="left:234.400px;top:359px;width:133px;font-size:8px;color:#262626;white-space:normal;text-align:center;line-height:9.800px">got acquainted with the characteristics of the products</span>
<span class="sf" style="left:228.500px;top:527.600px;width:300px;font-size:12px;color:#1f1f1f;white-space:normal;line-height:14.200px">Actions performed by respondents using the website of the online store for the last year according to their financial situation</span>
<span class="sf" style="left:638.2px;top:357.6px;font-size:8px;color:#262626;">All</span>
<div class="abs" style="left:651.3px;top:359.9px;width:4.6px;height:4.6px;background:#bf8a7c"></div>
<span class="sf" style="left:659.3px;top:357.6px;font-size:8px;color:#262626;">Women</span>
<div class="abs" style="left:687.3px;top:359.9px;width:4.6px;height:4.6px;background:#d1b3a7"></div>
<span class="sf" style="left:694.6px;top:357.6px;font-size:8px;color:#262626;">Men</span>
<div class="abs" style="left:672.1px;top:374.5px;width:0.6px;height:207px;background:#bdbdbd"></div>
<div class="abs" style="left:721px;top:377.7px;width:62.8px;height:17.9px;background:#bf8a7c"></div>
<div class="abs" style="left:783.8px;top:377.7px;width:31.7px;height:17.9px;background:#d1b3a7"></div>
<span class="sf" style="left:697px;top:383.3px;font-size:8px;color:#333;transform:translateX(-50%);">33%</span>
<span class="sf" style="left:752.4px;top:383.3px;font-size:8px;color:#38282a;transform:translateX(-50%);">44%</span>
<span class="sf" style="left:799.6px;top:383.3px;font-size:8px;color:#3a3030;transform:translateX(-50%);">22%</span>
<span class="sf" style="left:667.4px;top:383.3px;font-size:8.05px;color:#222;transform:translateX(-100%);">Availability of reviews from other buyers</span>
<div class="abs" style="left:721px;top:400.9px;width:37.7px;height:17.9px;background:#bf8a7c"></div>
<div class="abs" style="left:758.7px;top:400.9px;width:56.8px;height:17.9px;background:#d1b3a7"></div>
<span class="sf" style="left:697px;top:406.5px;font-size:8px;color:#333;transform:translateX(-50%);">28%</span>
<span class="sf" style="left:739.9px;top:406.5px;font-size:8px;color:#38282a;transform:translateX(-50%);">22%</span>
<span class="sf" style="left:787.1px;top:406.5px;font-size:8px;color:#3a3030;transform:translateX(-50%);">33%</span>
<span class="sf" style="left:667.4px;top:406.5px;font-size:8.05px;color:#222;transform:translateX(-100%);">Ability to compare products</span>
<div class="abs" style="left:721px;top:423.6px;width:59.2px;height:17.9px;background:#bf8a7c"></div>
<div class="abs" style="left:780.2px;top:423.6px;width:35.3px;height:17.9px;background:#d1b3a7"></div>
<span class="sf" style="left:697px;top:429.2px;font-size:8px;color:#333;transform:translateX(-50%);">44%</span>
<span class="sf" style="left:750.6px;top:429.2px;font-size:8px;color:#38282a;transform:translateX(-50%);">56%</span>
<span class="sf" style="left:797.9px;top:429.2px;font-size:8px;color:#3a3030;transform:translateX(-50%);">33%</span>
<span class="sf" style="left:667.4px;top:429.2px;font-size:8.05px;color:#222;transform:translateX(-100%);">Low prices</span>
<div class="abs" style="left:721px;top:446.7px;width:62.8px;height:17.9px;background:#bf8a7c"></div>
<div class="abs" style="left:783.8px;top:446.7px;width:31.7px;height:17.9px;background:#d1b3a7"></div>
<span class="sf" style="left:697px;top:452.3px;font-size:8px;color:#333;transform:translateX(-50%);">17%</span>
<span class="sf" style="left:752.4px;top:452.3px;font-size:8px;color:#38282a;transform:translateX(-50%);">22%</span>
<span class="sf" style="left:799.6px;top:452.3px;font-size:8px;color:#3a3030;transform:translateX(-50%);">11%</span>
<span class="sf" style="left:667.4px;top:452.3px;font-size:8.05px;color:#222;transform:translateX(-100%);">Access to detailed product information</span>
<div class="abs" style="left:721px;top:469.4px;width:56.7px;height:17.9px;background:#bf8a7c"></div>
<div class="abs" style="left:777.7px;top:469.4px;width:37.8px;height:17.9px;background:#d1b3a7"></div>
<span class="sf" style="left:697px;top:475.0px;font-size:8px;color:#333;transform:translateX(-50%);">56%</span>
<span class="sf" style="left:749.4px;top:475.0px;font-size:8px;color:#38282a;transform:translateX(-50%);">67%</span>
<span class="sf" style="left:796.6px;top:475.0px;font-size:8px;color:#3a3030;transform:translateX(-50%);">44%</span>
<div class="abs" style="left:721px;top:492.5px;width:31.2px;height:17.9px;background:#bf8a7c"></div>
<div class="abs" style="left:752.2px;top:492.5px;width:63.3px;height:17.9px;background:#d1b3a7"></div>
<span class="sf" style="left:697px;top:498.1px;font-size:8px;color:#333;transform:translateX(-50%);">17%</span>
<span class="sf" style="left:736.6px;top:498.1px;font-size:8px;color:#38282a;transform:translateX(-50%);">11%</span>
<span class="sf" style="left:783.9px;top:498.1px;font-size:8px;color:#3a3030;transform:translateX(-50%);">22%</span>
<span class="sf" style="left:667.4px;top:498.1px;font-size:8.05px;color:#222;transform:translateX(-100%);">Round-the-clock operation</span>
<div class="abs" style="left:721px;top:515.3px;width:31.2px;height:17.9px;background:#bf8a7c"></div>
<div class="abs" style="left:752.2px;top:515.3px;width:63.3px;height:17.9px;background:#d1b3a7"></div>
<span class="sf" style="left:697px;top:520.9px;font-size:8px;color:#333;transform:translateX(-50%);">17%</span>
<span class="sf" style="left:736.6px;top:520.9px;font-size:8px;color:#38282a;transform:translateX(-50%);">11%</span>
<span class="sf" style="left:783.9px;top:520.9px;font-size:8px;color:#3a3030;transform:translateX(-50%);">22%</span>
<div class="abs" style="left:721px;top:538.4px;width:46.6px;height:17.9px;background:#bf8a7c"></div>
<div class="abs" style="left:767.6px;top:538.4px;width:47.9px;height:17.9px;background:#d1b3a7"></div>
<span class="sf" style="left:697px;top:544.0px;font-size:8px;color:#333;transform:translateX(-50%);">44%</span>
<span class="sf" style="left:744.3px;top:544.0px;font-size:8px;color:#38282a;transform:translateX(-50%);">44%</span>
<span class="sf" style="left:791.5px;top:544.0px;font-size:8px;color:#3a3030;transform:translateX(-50%);">44%</span>
<span class="sf" style="left:667.4px;top:544.0px;font-size:8.05px;color:#222;transform:translateX(-100%);">Home delivery</span>
<div class="abs" style="left:721px;top:561.1px;width:35.2px;height:17.9px;background:#bf8a7c"></div>
<div class="abs" style="left:756.2px;top:561.1px;width:59.3px;height:17.9px;background:#d1b3a7"></div>
<span class="sf" style="left:697px;top:566.7px;font-size:8px;color:#333;transform:translateX(-50%);">44%</span>
<span class="sf" style="left:738.6px;top:566.7px;font-size:8px;color:#38282a;transform:translateX(-50%);">33%</span>
<span class="sf" style="left:785.9px;top:566.7px;font-size:8px;color:#3a3030;transform:translateX(-50%);">56%</span>
<span class="sf" style="left:667.4px;top:566.7px;font-size:8.05px;color:#222;transform:translateX(-100%);">Saving time</span>
<span class="sf" style="left:517.400px;top:469.400px;width:150px;font-size:8.050px;color:#222;white-space:nowrap;text-align:center;line-height:9.700px;transform:translateX(-50%);left:595.200px">Ability to find products that are not available<br>in other stores</span>
<span class="sf" style="top:515.300px;width:150px;font-size:8.050px;color:#222;white-space:nowrap;text-align:center;line-height:9.700px;transform:translateX(-50%);left:598.500px">Ability to avoid a large number of contacts<br>of traditional stores</span>
<span class="sf" style="left:504px;top:599.200px;width:320px;font-size:12.050px;color:#1f1f1f;white-space:normal;line-height:14px">Students' opinion on the benefits of online shopping in general and by gender</span>
<div class="abs" style="left:859.5px;top:257px;width:164.5px;height:440px;background:#dcdcdc"></div>
<div class="abs" style="left:859.3px;top:257px;width:0.7px;height:437px;background:#cdcdcd"></div>
<div class="abs" style="left:992.8px;top:257px;width:0.7px;height:437px;background:#cfcfcf"></div>
<span class="c" style="left:870px;top:265.6px;font-size:7.3px;color:#2b2b2b;">对象属性</span>
<svg class="abs" style="left:902.5px;top:269px;" width="4" height="3" viewBox="0 0 4 3"><path d="M0 0h3.600L1.800 2.200z" fill="#555"/></svg>
<svg class="abs" style="left:961px;top:266px;" width="8" height="8" viewBox="0 0 8 8"><path d="M4.500.600l2.900 2.900-1 .3-1.300 1.300-.2 1.600L2.300 4.100l1.600-.2 1.300-1.300zM3.200 4.800L.700 7.300" fill="none" stroke="#3c3c3c" stroke-width=".7" stroke-linejoin="round"/></svg>
<svg class="abs" style="left:976px;top:267px;" width="6" height="6" viewBox="0 0 6 6"><path d="M.500.500l5 5M5.500.500l-5 5" stroke="#3c3c3c" stroke-width=".8"/></svg>
<span class="c" style="left:869px;top:285.0px;font-size:6.6px;color:#cf6a2a;">填充</span>
<div class="abs" style="left:869px;top:294.8px;width:12px;height:1.1px;background:#cf6a2a"></div>
<svg class="abs" style="left:870px;top:308px;" width="4" height="3" viewBox="0 0 4 3"><path d="M0 0h3.400L1.700 2.200z" fill="#555"/></svg>
<span class="c" style="left:876px;top:305.2px;font-size:6.4px;color:#2b2b2b;font-weight:700">填充</span>
<div class="abs" style="left:918.8px;top:303.4px;width:65.4px;height:11.2px;background:#fafafa;border-radius:1.500px;box-shadow:0 0 .8px rgba(0,0,0,.3)"></div>
<div class="abs" style="left:920.8px;top:304.8px;width:52px;height:8.4px;background:#dddad5"></div>
<svg class="abs" style="left:976.5px;top:308px;" width="5" height="3" viewBox="0 0 5 3"><path d="M.400.400l2.100 1.900L4.600.400" fill="none" stroke="#666" stroke-width=".7"/></svg>
<div class="abs" style="left:877.3px;top:326.1px;width:7.4px;height:7.4px;border-radius:50%;border:.9px solid #3b6fe0;background:#fff"></div>
<div class="abs" style="left:879.5px;top:328.3px;width:3px;height:3px;border-radius:50%;background:#2f63d8"></div>
<span class="c" style="left:887px;top:326.1px;font-size:6.2px;color:#2b2b2b;">纯色填充(S)</span>
<div class="abs" style="left:877.3px;top:342.7px;width:7.4px;height:7.4px;border-radius:50%;border:.8px solid #8e8e8e;background:#e6e6e6"></div>
<span class="c" style="left:887px;top:342.7px;font-size:6.2px;color:#2b2b2b;">渐变填充(G)</span>
<div class="abs" style="left:877.3px;top:358.90000000000003px;width:7.4px;height:7.4px;border-radius:50%;border:.8px solid #8e8e8e;background:#e6e6e6"></div>
<span class="c" style="left:887px;top:358.9px;font-size:6.2px;color:#2b2b2b;">图片或纹理填充(P)</span>
<div class="abs" style="left:877.3px;top:375.1px;width:7.4px;height:7.4px;border-radius:50%;border:.8px solid #8e8e8e;background:#e6e6e6"></div>
<span class="c" style="left:887px;top:375.1px;font-size:6.2px;color:#2b2b2b;">图案填充(A)</span>
<div class="abs" style="left:877.3px;top:391.7px;width:7px;height:7px;border:.8px solid #7a7a7a;background:#e9e9e9;border-radius:.8px"></div>
<span class="c" style="left:887px;top:391.5px;font-size:6.2px;color:#2b2b2b;">隐藏背景图形(H)</span>
<span class="c" style="left:870px;top:407.7px;font-size:6.4px;color:#2b2b2b;">颜色(C)</span>
<div class="abs" style="left:919px;top:406px;width:65px;height:12px;background:#fafafa;border-radius:1.500px;box-shadow:0 0 .8px rgba(0,0,0,.3)"></div>
<svg class="abs" style="left:976.5px;top:410.5px;" width="5" height="3" viewBox="0 0 5 3"><path d="M.400.400l2.100 1.900L4.600.400" fill="none" stroke="#666" stroke-width=".7"/></svg>
<span class="c" style="left:870px;top:424.2px;font-size:6.4px;color:#2b2b2b;">透明度(T)</span>
<div class="abs" style="left:910px;top:427.7px;width:28.5px;height:0.8px;background:#9a9a9a"></div>
<div class="abs" style="left:905.8px;top:425.2px;width:5.6px;height:5.6px;border-radius:50%;background:#f4f4f4;border:.7px solid #8a8a8a"></div>
<div class="abs" style="left:907.8px;top:427.2px;width:1.6px;height:1.6px;border-radius:50%;background:#555"></div>
<div class="abs" style="left:941.5px;top:422px;width:42.5px;height:12px;background:#fafafa;border-radius:1.500px;box-shadow:0 0 .8px rgba(0,0,0,.3)"></div>
<span class="c" style="left:946.5px;top:424.2px;font-size:6.4px;color:#2b2b2b;">0</span>
<span class="c" style="left:968.5px;top:424.2px;font-size:6.4px;color:#2b2b2b;">%</span>
<svg class="abs" style="left:978.5px;top:424px;" width="4" height="8" viewBox="0 0 4 8"><path d="M.400 2.600L2 .900l1.600 1.700M.400 5.400L2 7.100l1.600-1.700" fill="none" stroke="#666" stroke-width=".6"/></svg>
<div class="abs" style="left:869px;top:679.3px;width:29.3px;height:10.8px;background:#fafafa;border-radius:1.500px;box-shadow:0 0 .8px rgba(0,0,0,.4)"></div>
<span class="c" style="left:883.7px;top:681.1px;font-size:6.1px;color:#2b2b2b;transform:translateX(-50%);">全部应用</span>
<div class="abs" style="left:903.5px;top:679.3px;width:29.3px;height:10.8px;background:#e4e4e4;border-radius:1.500px;box-shadow:0 0 .8px rgba(0,0,0,.25)"></div>
<span class="c" style="left:918.2px;top:681.1px;font-size:6.1px;color:#a8a8a8;transform:translateX(-50%);">重置背景</span>
<div class="abs" style="left:1004.5px;top:269px;width:6px;height:0.8px;background:#555"></div>
<div class="abs" style="left:998.7px;top:278px;width:18px;height:21.5px;background:#cdcdcd;border-radius:2px"></div>
<svg class="abs" style="left:1003.5px;top:280.5px;" width="9" height="7" viewBox="0 0 9 7"><circle cx="2" cy="1.600" r="1.200" fill="none" stroke="#444" stroke-width=".7"/><path d="M3.800 1.600h4.500M.500 5.200h4" stroke="#444" stroke-width=".7"/><circle cx="6.300" cy="5.200" r="1.200" fill="none" stroke="#444" stroke-width=".7"/></svg>
<span class="c" style="left:1007.7px;top:290.3px;font-size:6.2px;color:#2b2b2b;transform:translateX(-50%);font-weight:700">属性</span>
<svg class="abs" style="left:1003.2px;top:306.5px;" width="9" height="9" viewBox="0 0 9 9"><path d="M4.500.700l1.200 2.500 2.700.4-2 1.900.5 2.700-2.400-1.300-2.400 1.300.5-2.700-2-1.900 2.700-.4z" fill="none" stroke="#444" stroke-width=".75" stroke-linejoin="round"/></svg>
<span class="c" style="left:1007.7px;top:316.7px;font-size:6.2px;color:#2e2e2e;transform:translateX(-50%);">动画</span>
<svg class="abs" style="left:1003.2px;top:333px;" width="9" height="9" viewBox="0 0 9 9"><rect x=".500" y=".700" width="6" height="4.500" rx=".8" fill="none" stroke="#444" stroke-width=".75"/><rect x="2.500" y="3.300" width="6" height="4.500" rx=".8" fill="#dcdcdc" stroke="#444" stroke-width=".75"/></svg>
<span class="c" style="left:1007.7px;top:343.6px;font-size:6.2px;color:#2e2e2e;transform:translateX(-50%);">切换</span>
<svg class="abs" style="left:1003.2px;top:359.5px;" width="9" height="9" viewBox="0 0 9 9"><path d="M1 8l5.500-5.500M5.500 1.500l2 2" stroke="#444" stroke-width=".8"/><path d="M2 .800v2.400M.800 2h2.400M7 5.500v2.400M5.800 6.700h2.400" stroke="#444" stroke-width=".6"/></svg>
<span class="c" style="left:1007.7px;top:369.9px;font-size:6.2px;color:#2e2e2e;transform:translateX(-50%);">美化</span>
<svg class="abs" style="left:1003.2px;top:386px;" width="9" height="9" viewBox="0 0 9 9"><path d="M3 .700L.600 2.200l1 1.800 1-.5v4.800h3.800V3.500l1 .5 1-1.800L6 .700C5.700 1.500 5.200 2 4.500 2S3.300 1.500 3 .700z" fill="none" stroke="#444" stroke-width=".75" stroke-linejoin="round"/></svg>
<span class="c" style="left:1007.7px;top:396.5px;font-size:6.2px;color:#2e2e2e;transform:translateX(-50%);">主题</span>
<svg class="abs" style="left:1003.2px;top:413px;" width="9" height="9" viewBox="0 0 9 9"><path d="M.800 3.500L1.800.800h5.400l1 2.700c0 .8-.6 1.300-1.300 1.300S5.700 4.300 5.700 3.500c0 .8-.5 1.300-1.200 1.300S3.300 4.300 3.300 3.500c0 .8-.6 1.300-1.300 1.300S.800 4.300.800 3.500zM1.500 5v3.300h6V5" fill="none" stroke="#444" stroke-width=".7" stroke-linejoin="round"/></svg>
<span class="c" style="left:1007.7px;top:423.1px;font-size:6.2px;color:#2e2e2e;transform:translateX(-50%);">素材</span>
<svg class="abs" style="left:1003.2px;top:439.5px;" width="9" height="9" viewBox="0 0 9 9"><path d="M.700 1.200h3c.5 0 .8.300.8.800v6c0-.5-.3-.8-.8-.8h-3zM8.300 1.200h-3c-.5 0-.8.300-.8.800v6c0-.5.300-.8.800-.8h3z" fill="none" stroke="#444" stroke-width=".75" stroke-linejoin="round"/></svg>
<span class="c" style="left:1007.7px;top:450.3px;font-size:6.2px;color:#2e2e2e;transform:translateX(-50%);">文库</span>
<svg class="abs" style="left:1003.2px;top:466px;" width="9" height="9" viewBox="0 0 9 9"><circle cx="4.500" cy="4.500" r="3.800" fill="none" stroke="#444" stroke-width=".75"/><path d="M3.300 3.600c0-.7.500-1.200 1.200-1.200s1.200.5 1.200 1.100c0 1-1.200 1-1.200 2" fill="none" stroke="#444" stroke-width=".7"/><circle cx="4.500" cy="6.600" r=".45" fill="#444"/></svg>
<span class="c" style="left:1007.7px;top:476.8px;font-size:6.2px;color:#2e2e2e;transform:translateX(-50%);">帮助</span>
<svg class="abs" style="left:1004.2px;top:495.5px;" width="7" height="2" viewBox="0 0 7 2"><circle cx="1" cy="1" r=".65" fill="#444"/><circle cx="3.500" cy="1" r=".65" fill="#444"/><circle cx="6" cy="1" r=".65" fill="#444"/></svg>
<span class="c" style="left:1007.7px;top:502.6px;font-size:6.2px;color:#2e2e2e;transform:translateX(-50%);">设置</span>
<div class="abs" style="left:37px;top:694.3px;width:987px;height:15px;background:#dcdcdc"></div>
<div class="abs" style="left:37px;top:696px;width:822px;height:0.7px;background:#cfcfcf"></div>
<span class="c" style="left:45.6px;top:698.9px;font-size:6.3px;color:#2b2b2b;">幻灯片 12 / 18</span>
<div class="abs" style="left:91.6px;top:698.5px;width:0.7px;height:8px;background:#c2c2c2"></div>
<svg class="abs" style="left:99.5px;top:699px;" width="7" height="7" viewBox="0 0 7 7"><path d="M.500.700h3M2 .700v5.500M.800 6.200h2.400" stroke="#3c3c3c" stroke-width=".7" fill="none"/><path d="M4.300 2.500h2.200v2.200c0 1-.5 1.500-1.100 1.500s-1.100-.5-1.100-1.500z" fill="none" stroke="#3c3c3c" stroke-width=".7"/></svg>
<span class="c" style="left:108.6px;top:698.8px;font-size:6.5px;color:#2b2b2b;">Office Theme</span>
<div class="abs" style="left:156px;top:698.5px;width:0.7px;height:8px;background:#c2c2c2"></div>
<svg class="abs" style="left:163.5px;top:698.5px;" width="7" height="8" viewBox="0 0 7 8"><rect x=".500" y=".500" width="5.500" height="7" fill="none" stroke="#3c3c3c" stroke-width=".7"/><circle cx="3.600" cy="4.300" r="1.500" fill="#dcdcdc" stroke="#3c3c3c" stroke-width=".6"/><path d="M4.700 5.400l1.500 1.500" stroke="#3c3c3c" stroke-width=".6"/></svg>
<span class="c" style="left:173px;top:698.9px;font-size:6.3px;color:#2b2b2b;">校对</span>
<div class="abs" style="left:192px;top:698.5px;width:0.7px;height:8px;background:#c2c2c2"></div>
<svg class="abs" style="left:201.5px;top:699.3px;" width="6" height="6" viewBox="0 0 6 6"><path d="M3 .400L5.800 5.600H.200z" fill="#f0a818"/><path d="M3 2.300v1.800M3 4.600v.5" stroke="#fff" stroke-width=".6"/></svg>
<span class="c" style="left:210px;top:698.9px;font-size:6.3px;color:#2b2b2b;">缺失字体</span>
<svg class="abs" style="left:664.5px;top:699px;" width="7" height="7" viewBox="0 0 7 7"><path d="M1 3.500C1 2 2.100.900 3.500.900S6 2 6 3.500v1.800c0 .6-.4 1-1 1H2c-.6 0-1-.4-1-1z" fill="none" stroke="#3c3c3c" stroke-width=".7"/><path d="M2.500 3.800h.1M4.400 3.800h.1" stroke="#3c3c3c" stroke-width=".8" stroke-linecap="round"/></svg>
<span class="c" style="left:674.5px;top:699.0px;font-size:6.1px;color:#2b2b2b;">智能美化</span>
<svg class="abs" style="left:701px;top:702.1px;" width="4" height="3" viewBox="0 0 4 3"><path d="M0 0h3.600L1.800 2.200z" fill="#555"/></svg>
<div class="abs" style="left:713px;top:698.5px;width:0.7px;height:8px;background:#c2c2c2"></div>
<svg class="abs" style="left:720.5px;top:699.7px;" width="7" height="6" viewBox="0 0 7 6"><path d="M0 .500h6M0 3h6M0 5.500h6" stroke="#3c3c3c" stroke-width=".7"/></svg>
<span class="c" style="left:732px;top:699.0px;font-size:6.1px;color:#2b2b2b;">备注</span>
<svg class="abs" style="left:746.5px;top:702.1px;" width="4" height="3" viewBox="0 0 4 3"><path d="M0 0h3.600L1.800 2.200z" fill="#555"/></svg>
<svg class="abs" style="left:758.5px;top:699.2px;" width="8" height="7" viewBox="0 0 8 7"><path d="M.500.500h6.500v4.500h-2l-1.200 1.500-1.200-1.500H.500z" fill="none" stroke="#3c3c3c" stroke-width=".7" stroke-dasharray="2 .9"/></svg>
<span class="c" style="left:769.5px;top:699.0px;font-size:6.1px;color:#2b2b2b;">批注</span>
<div class="abs" style="left:788.5px;top:698.5px;width:0.7px;height:8px;background:#c2c2c2"></div>
<div class="abs" style="left:793.3px;top:697.2px;width:12px;height:11.3px;background:#cbcbcb;border-radius:1px"></div>
<svg class="abs" style="left:795.8px;top:699.7px;" width="7" height="6" viewBox="0 0 7 6"><rect x=".400" y=".400" width="6.200" height="5.200" fill="none" stroke="#3c3c3c" stroke-width=".7"/><path d="M2.300.400v5.200" stroke="#3c3c3c" stroke-width=".7"/></svg>
<svg class="abs" style="left:812.5px;top:699.7px;" width="7" height="6" viewBox="0 0 7 6"><rect x=".400" y=".400" width="2.200" height="2" fill="none" stroke="#3c3c3c" stroke-width=".6"/><rect x="4" y=".400" width="2.200" height="2" fill="none" stroke="#3c3c3c" stroke-width=".6"/><rect x=".400" y="3.600" width="2.200" height="2" fill="none" stroke="#3c3c3c" stroke-width=".6"/><rect x="4" y="3.600" width="2.200" height="2" fill="none" stroke="#3c3c3c" stroke-width=".6"/></svg>
<svg class="abs" style="left:828.5px;top:699.5px;" width="8" height="7" viewBox="0 0 8 7"><path d="M.500.800h2.500c.6 0 1 .3 1 .8v4.600c0-.4-.4-.7-1-.7H.500zM7.500.800H5c-.6 0-1 .3-1 .8v4.600c0-.4.400-.7 1-.7h2.500z" fill="none" stroke="#3c3c3c" stroke-width=".65"/></svg>
<div class="abs" style="left:847.7px;top:698px;width:11px;height:9.7px;background:#e26f1b;border-radius:1.200px"></div>
<svg class="abs" style="left:851.5px;top:700.3px;" width="4" height="5" viewBox="0 0 4 5"><path d="M.400.400l3.200 2.100L.400 4.600z" fill="#fff"/></svg>
<svg class="abs" style="left:862.8px;top:701.7px;" width="4" height="3" viewBox="0 0 4 3"><path d="M.300.400l1.700 1.700L3.700.400" fill="none" stroke="#444" stroke-width=".7"/></svg>
<div class="abs" style="left:872.3px;top:698.5px;width:0.7px;height:8px;background:#c2c2c2"></div>
<svg class="abs" style="left:879.8px;top:699.2px;" width="7" height="7" viewBox="0 0 7 7"><path d="M.400 2V.400H2M5 .400h1.600V2M6.600 5v1.600H5M2 6.600H.400V5" fill="none" stroke="#3c3c3c" stroke-width=".7"/><rect x="2.200" y="2.200" width="2.600" height="2.600" fill="none" stroke="#3c3c3c" stroke-width=".6"/></svg>
<span class="c" style="left:899px;top:698.9px;font-size:6.3px;color:#2b2b2b;">98%</span>
<svg class="abs" style="left:919.2px;top:701.7px;" width="4" height="3" viewBox="0 0 4 3"><path d="M.300.400l1.700 1.700L3.700.400" fill="none" stroke="#444" stroke-width=".7"/></svg>
<div class="abs" style="left:931.8px;top:702.3px;width:5.2px;height:0.9px;background:#2b2b2b"></div>
<div class="abs" style="left:944.8px;top:702.4px;width:54.2px;height:0.7px;background:#b0b0b0"></div>
<div class="abs" style="left:944.8px;top:702.2px;width:26.5px;height:1.1px;background:#3b6fe0"></div>
<div class="abs" style="left:969.8px;top:701px;width:3.4px;height:3.4px;border-radius:50%;background:#f6f6f6;border:.6px solid #7a7a7a"></div>
<svg class="abs" style="left:1006.8px;top:700px;" width="6" height="6" viewBox="0 0 6 6"><path d="M3 .300v5.400M.300 3h5.400" stroke="#2b2b2b" stroke-width=".9"/></svg>
<div class="abs" style="left:37px;top:709.3px;width:987px;height:21.2px;background:#1f1f1f"></div>
<div class="abs" style="left:49.5px;top:716px;width:10px;height:10px;border-radius:50%;background:linear-gradient(180deg,#f6a21c 0%,#f08a1a 55%,#d9641a 56%,#e8781a 100%)"></div>
<span class="c" style="left:65px;top:713.7px;font-size:5.2px;color:#d8d8d8;">21°C</span>
<span class="c" style="left:65px;top:721.6px;font-size:5.6px;color:#e8e8e8;">晴朗</span>
<div class="abs" style="left:388.5px;top:715.8px;width:5.8px;height:5.3px;background:#3fa9f0"></div>
<div class="abs" style="left:394.8px;top:715.8px;width:5.8px;height:5.3px;background:#3fa9f0"></div>
<div class="abs" style="left:388.5px;top:721.5999999999999px;width:5.8px;height:5.3px;background:#2f95e4"></div>
<div class="abs" style="left:394.8px;top:721.5999999999999px;width:5.8px;height:5.3px;background:#2f95e4"></div>
<div class="abs" style="left:407px;top:713.3px;width:113px;height:16px;background:#3b3b3b;border-radius:8px"></div>
<svg class="abs" style="left:413.5px;top:718px;" width="7" height="7" viewBox="0 0 7 7"><circle cx="2.800" cy="2.800" r="2.200" fill="none" stroke="#e0e0e0" stroke-width=".9"/><path d="M4.400 4.400l2 2" stroke="#e0e0e0" stroke-width="1"/></svg>
<span class="c" style="left:426px;top:717.6px;font-size:6.2px;color:#c8c8c8;">搜索</span>
<div class="abs" style="left:526.5px;top:718.5px;width:8.5px;height:8px;background:#8a8a8a;border-radius:.8px"></div>
<div class="abs" style="left:529.5px;top:716px;width:9px;height:8.5px;background:#e6e6e6;border-radius:.8px"></div>
<div class="abs" style="left:548px;top:716.5px;width:9px;height:10px;background:#5558af;border-radius:1.500px"></div>
<div class="abs" style="left:553.5px;top:716px;width:6.5px;height:6.5px;background:#7b83eb;border-radius:50%"></div>
<span class="c" style="left:549.8px;top:718.1px;font-size:6px;color:#fff;font-weight:700">T</span>
<div class="abs" style="left:555.8px;top:714.5px;width:5px;height:5px;background:#d93a3a;border-radius:50%"></div>
<div class="abs" style="left:570.5px;top:715px;width:13px;height:13px;border-radius:50%;background:conic-gradient(from 200deg,#2bc3d2,#35c1a0 25%,#1e88d6 45%,#1565c0 75%,#2bc3d2)"></div>
<div class="abs" style="left:574.5px;top:719.5px;width:6.5px;height:5.5px;border-radius:50%;background:#1f1f1f;opacity:.55"></div>
<div class="abs" style="left:593px;top:716.5px;width:13px;height:10.5px;background:#f7c331;border-radius:1px"></div>
<div class="abs" style="left:593px;top:716px;width:6px;height:2.5px;background:#e8a820;border-radius:1px 1px 0 0"></div>
<div class="abs" style="left:595.5px;top:722px;width:8px;height:5px;background:#3f8fe0"></div>
<div class="abs" style="left:615px;top:715px;width:13px;height:13px;border-radius:50%;background:#16305a"></div>
<div class="abs" style="left:621.5px;top:717.5px;width:4.5px;height:4.5px;border-radius:50%;border:1.200px solid #f0f0f0"></div>
<div class="abs" style="left:616.5px;top:722px;width:4px;height:3.5px;border-radius:50%;background:#f0f0f0"></div>
<svg class="abs" style="left:617px;top:719px;" width="8" height="6" viewBox="0 0 8 6"><path d="M1.500 4.500L6 1.500" stroke="#f0f0f0" stroke-width="1.500"/></svg>
<div class="abs" style="left:634.3px;top:710.5px;width:21px;height:20px;background:#303030;border-radius:1.500px"></div>
<span class="c" style="left:645px;top:713.5px;font-size:12.5px;color:#e8332a;transform:translateX(-50%);font-weight:700">W</span>
<div class="abs" style="left:642px;top:729px;width:6.5px;height:1.5px;background:#4cb4f0;border-radius:.7px"></div>
<div class="abs" style="left:656.8px;top:710.5px;width:20px;height:20px;background:#7d3b44;border-radius:1.500px"></div>
<div class="abs" style="left:660.3px;top:716px;width:8.5px;height:7.5px;background:#4cc764;border-radius:50%"></div>
<div class="abs" style="left:665.5px;top:719.5px;width:7.5px;height:6.5px;background:#eaeaea;border-radius:50%"></div>
<div class="abs" style="left:664.5px;top:729.2px;width:4.5px;height:1.3px;background:#d0d0d0;border-radius:.6px"></div>
<svg class="abs" style="left:859.5px;top:719.5px;" width="7" height="5" viewBox="0 0 7 5"><path d="M.600 4l2.900-3 2.900 3" fill="none" stroke="#f0f0f0" stroke-width="1"/></svg>
<div class="abs" style="left:871.4px;top:709.3px;width:16.4px;height:21.2px;background:#48b4f0"></div>
<svg class="abs" style="left:876.5px;top:714.5px;" width="6" height="11" viewBox="0 0 6 11"><rect x="1.500" y=".300" width="3" height="6" rx="1.500" fill="#15202a"/><path d="M.400 5c0 1.600 1.100 2.700 2.600 2.700S5.600 6.600 5.600 5M3 7.700v2.300" fill="none" stroke="#15202a" stroke-width=".8"/></svg>
<span class="c" style="left:895.8px;top:717.0px;font-size:7.5px;color:#f0f0f0;transform:translateX(-50%);">中</span>
<span class="c" style="left:915.4px;top:717.0px;font-size:7.5px;color:#f0f0f0;transform:translateX(-50%);">拼</span>
<svg class="abs" style="left:930px;top:718px;" width="9" height="7" viewBox="0 0 9 7"><path d="M.500 2.500C2.800.300 6.200.300 8.500 2.500M2 4.200c1.500-1.400 3.500-1.400 5 0M3.400 5.700c.7-.6 1.500-.6 2.200 0" fill="none" stroke="#f0f0f0" stroke-width=".8" stroke-linecap="round"/></svg>
<svg class="abs" style="left:942.5px;top:718px;" width="9" height="7" viewBox="0 0 9 7"><path d="M.500 2.500h1.700L4.500.500v6L2.200 4.500H.500z" fill="none" stroke="#f0f0f0" stroke-width=".7" stroke-linejoin="round"/><path d="M5.800 2c.8.800.8 2.200 0 3M7 1c1.400 1.400 1.400 3.600 0 5" fill="none" stroke="#f0f0f0" stroke-width=".7"/></svg>
<svg class="abs" style="left:954.5px;top:718.5px;" width="10" height="6" viewBox="0 0 10 6"><rect x=".500" y=".800" width="7.500" height="4.400" rx="1" fill="none" stroke="#f0f0f0" stroke-width=".7"/><rect x="1.400" y="1.700" width="5" height="2.600" fill="#f0f0f0"/><path d="M8.700 2.200v1.600" stroke="#f0f0f0" stroke-width=".8"/><path d="M2 0l1.500 1.500" stroke="#f0f0f0" stroke-width=".7"/></svg>
<span class="c" style="left:1000.8px;top:712.9px;font-size:6.5px;color:#f0f0f0;transform:translateX(-100%);">20:40</span>
<span class="c" style="left:1000.8px;top:721.6px;font-size:6.4px;color:#f0f0f0;transform:translateX(-100%);">2023/6/18</span>
<svg class="abs" style="left:1004.5px;top:717.5px;" width="7" height="8" viewBox="0 0 7 8"><path d="M3.500.800c1.400 0 2.300 1 2.300 2.400v1.600l.8 1.200H.400l.8-1.200V3.200C1.200 1.800 2.100.800 3.500.800zM2.600 6.800c.2.500.5.700.9.700s.7-.2.900-.7" fill="none" stroke="#f0f0f0" stroke-width=".7"/><path d="M2.500 2.300l1.500 2.200" stroke="#f0f0f0" stroke-width=".5"/></svg>
<div class="abs" style="left:0px;top:730.5px;width:1024px;height:3.8px;background:#fdfdfd"></div>
<div class="abs" style="left:0px;top:734.3px;width:1024px;height:4.7px;background:#e2e2e2"></div>
</div>
<div class="abs" style="left:3px;top:693.8px;width:133px;height:27.2px;background:rgba(52,52,52,.8);border-radius:5px"></div>
<span class="abs" style="left:10px;top:697.500px;font-size:15px;color:#fff;white-space:nowrap;transform:scaleX(.9);transform-origin:0 50%;line-height:1.2">Фенцзе Сє</span>
<div class="abs" style="left:85px;top:706.8px;width:11.5px;height:1.1px;background:#e8e8e8"></div>
<svg class="abs" style="left:109.5px;top:701.5px;" width="14" height="14" viewBox="0 0 14 14"><path d="M7 .500v13M.500 7h13" stroke="#f2f2f2" stroke-width="1.200"/></svg>
</div>
</body>
</html>
